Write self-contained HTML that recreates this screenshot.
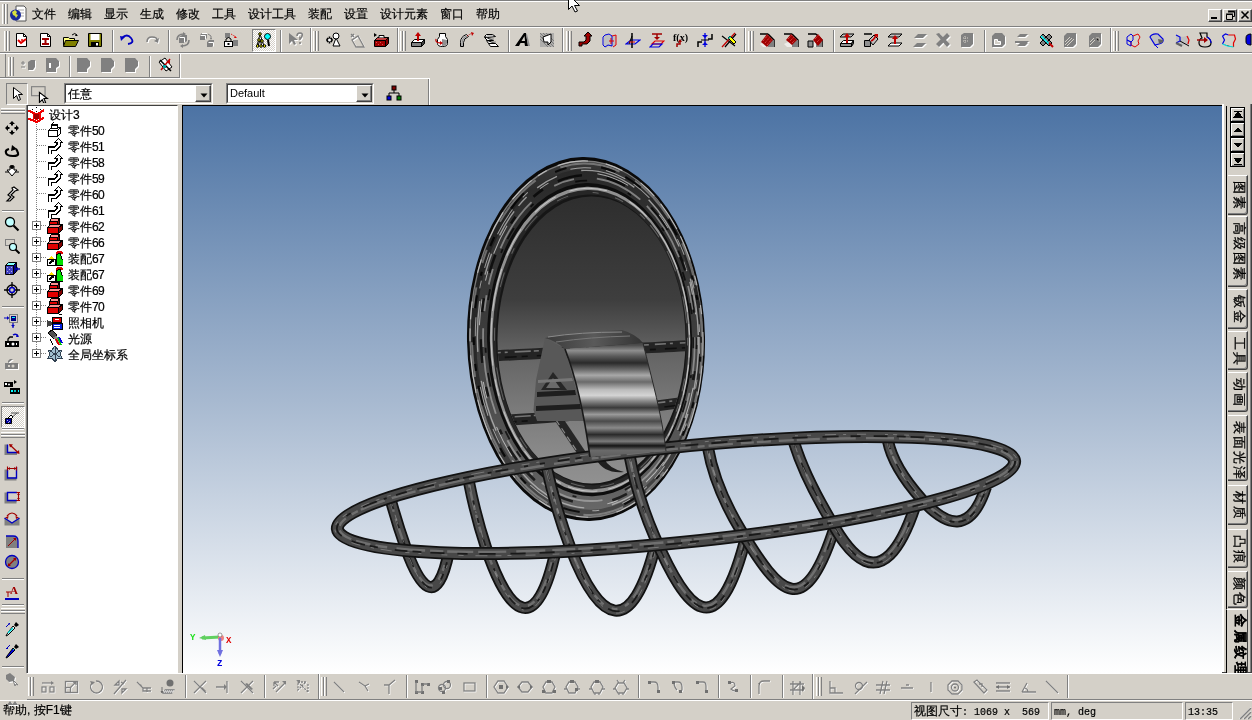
<!DOCTYPE html><html><head><meta charset="utf-8"><style>
*{box-sizing:border-box}
html,body{margin:0;padding:0}
body{width:1252px;height:720px;overflow:hidden;position:relative;background:#d4d0c8;font-family:"Liberation Sans",sans-serif;font-size:12px;color:#000;font-weight:500;-webkit-text-stroke:0.2px #000}
.a{position:absolute}
.rz{border-top:1px solid #fff;border-left:1px solid #fff;border-right:1px solid #808080;border-bottom:1px solid #808080}
.sk{border-top:1px solid #808080;border-left:1px solid #808080;border-right:1px solid #fff;border-bottom:1px solid #fff}
.hl{height:1px}
.vl{width:1px}
.grv{width:3px;border-left:1px solid #fff;border-right:1px solid #808080;background:#d4d0c8}
.grh{height:3px;border-top:1px solid #fff;border-bottom:1px solid #808080}
.sepv{width:2px;border-left:1px solid #808080;border-right:1px solid #fff}
.seph{height:2px;border-top:1px solid #808080;border-bottom:1px solid #fff}
.mt{top:7px;line-height:14px;font-size:12px}
svg{display:block}
</style></head><body style="will-change:transform">
<div class="a " style="left:0px;top:0px;width:1252px;height:1px;background:#808080"></div>
<div class="a " style="left:0px;top:1px;width:1252px;height:1px;background:#fff"></div>
<div class="a " style="left:0px;top:26px;width:1252px;height:1px;background:#808080"></div>
<div class="a " style="left:0px;top:27px;width:1252px;height:1px;background:#fff"></div>
<div class="a grv" style="left:2px;top:4px;width:3px;height:20px;"></div>
<div class="a grv" style="left:5px;top:4px;width:3px;height:20px;"></div>
<svg class="a" style="left:9px;top:5px" width="18" height="18" viewBox="0 0 18 18">
<path d="M7 1h8l2 2v13H7z" fill="#fff" stroke="#555" stroke-width="1"/>
<path d="M9 5h6M9 8h6M9 11h6" stroke="#aaa"/>
<circle cx="6.5" cy="10" r="5.5" fill="#1a2a9a"/>
<path d="M3 7l3-2 2 2-1 2 2 1-2 3-1-2-2-1z" fill="#d8e040"/>
</svg>
<div class="a mt" style="left:32px">文件</div>
<div class="a mt" style="left:68px">编辑</div>
<div class="a mt" style="left:104px">显示</div>
<div class="a mt" style="left:140px">生成</div>
<div class="a mt" style="left:176px">修改</div>
<div class="a mt" style="left:212px">工具</div>
<div class="a mt" style="left:248px">设计工具</div>
<div class="a mt" style="left:308px">装配</div>
<div class="a mt" style="left:344px">设置</div>
<div class="a mt" style="left:380px">设计元素</div>
<div class="a mt" style="left:440px">窗口</div>
<div class="a mt" style="left:476px">帮助</div>
<div class="a" style="left:1208px;top:9px;width:14px;height:13px;background:#d4d0c8;border-top:1px solid #fff;border-left:1px solid #fff;border-right:1px solid #404040;border-bottom:1px solid #404040;box-shadow:inset -1px -1px 0 #808080"><svg width="12" height="11"><rect x="2" y="7" width="6" height="2" fill="#000"/></svg></div>
<div class="a" style="left:1223px;top:9px;width:14px;height:13px;background:#d4d0c8;border-top:1px solid #fff;border-left:1px solid #fff;border-right:1px solid #404040;border-bottom:1px solid #404040;box-shadow:inset -1px -1px 0 #808080"><svg width="12" height="11"><path d="M4.5 1.5h6v5h-2M4 2h6M2.5 4.5h6v5h-6z" fill="none" stroke="#000"/><path d="M2 4h7M4 1h7" stroke="#000"/></svg></div>
<div class="a" style="left:1238px;top:9px;width:14px;height:13px;background:#d4d0c8;border-top:1px solid #fff;border-left:1px solid #fff;border-right:1px solid #404040;border-bottom:1px solid #404040;box-shadow:inset -1px -1px 0 #808080"><svg width="12" height="11"><path d="M2.5 1.5l7 7M9.5 1.5l-7 7" stroke="#000" stroke-width="1.6"/></svg></div>
<div class="a " style="left:0px;top:52px;width:1252px;height:1px;background:#808080"></div>
<div class="a " style="left:0px;top:53px;width:1252px;height:1px;background:#fff"></div>
<div class="a " style="left:0px;top:78px;width:430px;height:1px;background:#fff"></div>
<div class="a " style="left:0px;top:77px;width:180px;height:1px;background:#808080"></div>
<div class="a grv" style="left:4px;top:31px;width:3px;height:20px;"></div>
<div class="a grv" style="left:7px;top:31px;width:3px;height:20px;"></div>
<div class="a sepv" style="left:112px;top:30px;width:2px;height:22px;"></div>
<div class="a sepv" style="left:168px;top:30px;width:2px;height:22px;"></div>
<div class="a sepv" style="left:280px;top:30px;width:2px;height:22px;"></div>
<div class="a sepv" style="left:508px;top:30px;width:2px;height:22px;"></div>
<div class="a sepv" style="left:833px;top:30px;width:2px;height:22px;"></div>
<div class="a sepv" style="left:984px;top:30px;width:2px;height:22px;"></div>
<div class="a sepv" style="left:310px;top:28px;width:2px;height:24px;"></div>
<div class="a sepv" style="left:397px;top:28px;width:2px;height:24px;"></div>
<div class="a sepv" style="left:562px;top:28px;width:2px;height:24px;"></div>
<div class="a sepv" style="left:744px;top:28px;width:2px;height:24px;"></div>
<div class="a sepv" style="left:1110px;top:28px;width:2px;height:24px;"></div>
<div class="a grv" style="left:313px;top:31px;width:3px;height:20px;"></div>
<div class="a grv" style="left:316px;top:31px;width:3px;height:20px;"></div>
<div class="a grv" style="left:400px;top:31px;width:3px;height:20px;"></div>
<div class="a grv" style="left:403px;top:31px;width:3px;height:20px;"></div>
<div class="a grv" style="left:566px;top:31px;width:3px;height:20px;"></div>
<div class="a grv" style="left:569px;top:31px;width:3px;height:20px;"></div>
<div class="a grv" style="left:748px;top:31px;width:3px;height:20px;"></div>
<div class="a grv" style="left:751px;top:31px;width:3px;height:20px;"></div>
<div class="a grv" style="left:1113px;top:31px;width:3px;height:20px;"></div>
<div class="a grv" style="left:1116px;top:31px;width:3px;height:20px;"></div>
<div class="a " style="left:252px;top:29px;width:24px;height:23px;border-top:1px solid #808080;border-left:1px solid #808080;border-right:1px solid #fff;border-bottom:1px solid #fff;background-color:#e8e6e0;background-image:repeating-conic-gradient(#fff 0 25%,#d4d0c8 0 50%);background-size:2px 2px"></div>
<div class="a " style="left:5px;top:54px;width:1px;height:24px;background:#808080"></div>
<div class="a grv" style="left:8px;top:57px;width:3px;height:19px;"></div>
<div class="a grv" style="left:11px;top:57px;width:3px;height:19px;"></div>
<div class="a sepv" style="left:69px;top:56px;width:2px;height:21px;"></div>
<div class="a sepv" style="left:149px;top:56px;width:2px;height:21px;"></div>
<div class="a sepv" style="left:179px;top:54px;width:2px;height:24px;"></div>
<div class="a " style="left:6px;top:83px;width:22px;height:22px;border-top:1px solid #808080;border-left:1px solid #808080;border-right:1px solid #fff;border-bottom:1px solid #fff;background:#d4d0c8"></div>
<div class="a sepv" style="left:428px;top:79px;width:2px;height:26px;"></div>
<div class="a" style="left:64px;top:83px;width:149px;height:21px;border-top:1px solid #808080;border-left:1px solid #808080;border-right:1px solid #fff;border-bottom:1px solid #fff"><div style="position:absolute;left:0;top:0;right:0;bottom:0;border-top:1px solid #404040;border-left:1px solid #404040;border-right:1px solid #d4d0c8;border-bottom:1px solid #d4d0c8;background:#fff"><div style="position:absolute;left:2px;top:2px;line-height:14px;font-size:12px">任意</div><div style="position:absolute;right:0;top:0;width:16px;bottom:0;background:#d4d0c8;border-top:1px solid #fff;border-left:1px solid #fff;border-right:1px solid #404040;border-bottom:1px solid #404040;box-shadow:inset -1px -1px 0 #808080"><svg width="14" height="16" style="position:absolute;left:2px;top:2px"><path d="M2.5 5.5h7l-3.5 4z" fill="#000"/></svg></div></div></div>
<div class="a" style="left:226px;top:83px;width:148px;height:21px;border-top:1px solid #808080;border-left:1px solid #808080;border-right:1px solid #fff;border-bottom:1px solid #fff"><div style="position:absolute;left:0;top:0;right:0;bottom:0;border-top:1px solid #404040;border-left:1px solid #404040;border-right:1px solid #d4d0c8;border-bottom:1px solid #d4d0c8;background:#fff"><div style="position:absolute;left:2px;top:2px;line-height:14px;font-size:12px"><span style="font-family:'Liberation Sans';font-size:11px;font-weight:normal;-webkit-text-stroke:0;position:relative;top:-1px">Default</span></div><div style="position:absolute;right:0;top:0;width:16px;bottom:0;background:#d4d0c8;border-top:1px solid #fff;border-left:1px solid #fff;border-right:1px solid #404040;border-bottom:1px solid #404040;box-shadow:inset -1px -1px 0 #808080"><svg width="14" height="16" style="position:absolute;left:2px;top:2px"><path d="M2.5 5.5h7l-3.5 4z" fill="#000"/></svg></div></div></div>
<div class="a " style="left:26px;top:105px;width:1px;height:568px;background:#808080"></div>
<div class="a grh" style="left:1px;top:108px;width:24px;height:3px;"></div>
<div class="a grh" style="left:1px;top:111px;width:24px;height:3px;"></div>
<div class="a seph" style="left:2px;top:210px;width:22px;height:2px;"></div>
<div class="a seph" style="left:2px;top:306px;width:22px;height:2px;"></div>
<div class="a seph" style="left:2px;top:402px;width:22px;height:2px;"></div>
<div class="a seph" style="left:2px;top:428px;width:22px;height:2px;"></div>
<div class="a seph" style="left:2px;top:578px;width:22px;height:2px;"></div>
<div class="a seph" style="left:2px;top:604px;width:22px;height:2px;"></div>
<div class="a seph" style="left:2px;top:666px;width:22px;height:2px;"></div>
<div class="a " style="left:1px;top:406px;width:24px;height:22px;border-top:1px solid #808080;border-left:1px solid #808080;border-right:1px solid #fff;border-bottom:1px solid #fff;background-color:#e8e6e0;background-image:repeating-conic-gradient(#fff 0 25%,#d4d0c8 0 50%);background-size:2px 2px"></div>
<div class="a grh" style="left:1px;top:432px;width:24px;height:3px;"></div>
<div class="a grh" style="left:1px;top:435px;width:24px;height:3px;"></div>
<div class="a grh" style="left:1px;top:608px;width:24px;height:3px;"></div>
<div class="a grh" style="left:1px;top:611px;width:24px;height:3px;"></div>
<div class="a " style="left:27px;top:105px;width:151px;height:569px;background:#fff;border-top:1px solid #404040;border-left:1px solid #404040;border-right:1px solid #fff;border-bottom:1px solid #fff"></div>
<div class="a " style="left:178px;top:105px;width:4px;height:568px;background:#d4d0c8"></div>
<div class="a " style="left:182px;top:105px;width:1041px;height:568px;border-top:1px solid #000;border-left:1px solid #000;background:linear-gradient(to bottom,#4c73a4 0%,#a7b9d0 52%,#ffffff 100%)"></div>
<div class="a " style="left:1222px;top:104px;width:2px;height:569px;background:#fff"></div>
<div class="a " style="left:1226px;top:106px;width:2px;height:567px;background:#000"></div>
<div class="a " style="left:1250px;top:104px;width:2px;height:569px;background:#404040"></div>
<div class="a " style="left:27px;top:673px;width:1225px;height:1px;background:#fff"></div>
<div class="a " style="left:27px;top:699px;width:1225px;height:1px;background:#808080"></div>
<div class="a " style="left:0px;top:700px;width:1252px;height:1px;background:#fff"></div>
<div class="a grv" style="left:28px;top:677px;width:3px;height:19px;"></div>
<div class="a grv" style="left:31px;top:677px;width:3px;height:19px;"></div>
<div class="a sepv" style="left:185px;top:675px;width:2px;height:23px;"></div>
<div class="a sepv" style="left:264px;top:675px;width:2px;height:23px;"></div>
<div class="a sepv" style="left:406px;top:675px;width:2px;height:23px;"></div>
<div class="a sepv" style="left:486px;top:675px;width:2px;height:23px;"></div>
<div class="a sepv" style="left:638px;top:675px;width:2px;height:23px;"></div>
<div class="a sepv" style="left:718px;top:675px;width:2px;height:23px;"></div>
<div class="a sepv" style="left:750px;top:675px;width:2px;height:23px;"></div>
<div class="a sepv" style="left:782px;top:675px;width:2px;height:23px;"></div>
<div class="a sepv" style="left:1067px;top:675px;width:2px;height:23px;"></div>
<div class="a sepv" style="left:318px;top:674px;width:2px;height:25px;"></div>
<div class="a grv" style="left:321px;top:677px;width:3px;height:19px;"></div>
<div class="a grv" style="left:324px;top:677px;width:3px;height:19px;"></div>
<div class="a sepv" style="left:812px;top:674px;width:2px;height:25px;"></div>
<div class="a grv" style="left:816px;top:677px;width:3px;height:19px;"></div>
<div class="a grv" style="left:819px;top:677px;width:3px;height:19px;"></div>
<div class="a" style="left:3px;top:703px;line-height:14px">帮助, 按F1键</div>
<div class="a sk" style="left:911px;top:702px;width:138px;height:18px;font-size:12px;line-height:16px;padding-left:2px;white-space:pre">视图尺寸<span style="font-family:'Liberation Mono',monospace;font-size:10px">: 1069 x  569</span></div>
<div class="a sk" style="left:1051px;top:702px;width:132px;height:18px;font-size:12px;line-height:16px;padding-left:2px;white-space:pre"><span style="font-family:'Liberation Mono',monospace;font-size:10px">mm, deg</span></div>
<div class="a sk" style="left:1185px;top:702px;width:48px;height:18px;font-size:12px;line-height:16px;padding-left:2px;white-space:pre"><span style="font-family:'Liberation Mono',monospace;font-size:10px">13:35</span></div>
<svg class="a" style="left:1236px;top:704px" width="16" height="16"><path d="M15 3L3 15M15 7L7 15M15 11L11 15" stroke="#fff"/><path d="M15 4L4 15M15 8L8 15M15 12L12 15" stroke="#808080" stroke-width="1.5"/></svg>
<svg class="a" style="left:0;top:0" width="1252" height="720" viewBox="0 0 1252 720">
<defs>
<linearGradient id="face" gradientUnits="userSpaceOnUse" x1="0" y1="197" x2="0" y2="490">
<stop offset="0" stop-color="#2e2e2e"/><stop offset="0.35" stop-color="#3e3e3e"/><stop offset="0.52" stop-color="#626262"/><stop offset="0.72" stop-color="#7a7a7a"/><stop offset="0.88" stop-color="#8a8a8a"/><stop offset="1" stop-color="#929292"/>
</linearGradient>
<linearGradient id="brk" gradientUnits="userSpaceOnUse" x1="0" y1="345" x2="0" y2="457">
<stop offset="0" stop-color="#4a4a4a"/><stop offset="0.05" stop-color="#8e8e8e"/><stop offset="0.1" stop-color="#5a5a5a"/>
<stop offset="0.16" stop-color="#2a2a2a"/><stop offset="0.22" stop-color="#6a6a6a"/><stop offset="0.27" stop-color="#a8a8a8"/>
<stop offset="0.33" stop-color="#6a6a6a"/><stop offset="0.4" stop-color="#bcbcbc"/><stop offset="0.45" stop-color="#d4d4d4"/><stop offset="0.5" stop-color="#8a8a8a"/>
<stop offset="0.56" stop-color="#3a3a3a"/><stop offset="0.62" stop-color="#9a9a9a"/><stop offset="0.68" stop-color="#4a4a4a"/>
<stop offset="0.74" stop-color="#8a8a8a"/><stop offset="0.8" stop-color="#2a2a2a"/><stop offset="0.86" stop-color="#7a7a7a"/>
<stop offset="0.9" stop-color="#151515"/><stop offset="0.94" stop-color="#6a6a6a"/><stop offset="1" stop-color="#5e5e5e"/>
</linearGradient>
<linearGradient id="brt" x1="0" y1="0" x2="1" y2="0">
<stop offset="0" stop-color="#3a3a3a"/><stop offset="0.5" stop-color="#5a5a5a"/><stop offset="1" stop-color="#333"/>
</linearGradient>
<linearGradient id="rg1" gradientUnits="userSpaceOnUse" x1="0" y1="157" x2="0" y2="521"><stop offset="0" stop-color="#3a3a3a"/><stop offset="0.15" stop-color="#222"/><stop offset="0.6" stop-color="#2a2a2a"/><stop offset="1" stop-color="#4a4a4a"/></linearGradient>
<linearGradient id="rg3" gradientUnits="userSpaceOnUse" x1="0" y1="157" x2="0" y2="521"><stop offset="0" stop-color="#262626"/><stop offset="0.15" stop-color="#303030"/><stop offset="0.5" stop-color="#3e3e3e"/><stop offset="1" stop-color="#6a6a6a"/></linearGradient>
<clipPath id="fclip"><ellipse cx="591.5" cy="340" rx="94" ry="143.5"/></clipPath>
</defs>
<g transform="rotate(-1.2 586 339)"><ellipse cx="586.0" cy="339.0" rx="119.0" ry="182.0" fill="#0a0a0a"/><ellipse cx="586.4" cy="339.1" rx="117.0" ry="178.9" fill="#7a7a7a"/><ellipse cx="586.7" cy="339.1" rx="116.0" ry="177.4" fill="url(#rg1)"/><ellipse cx="587.6" cy="339.3" rx="111.5" ry="170.4" fill="url(#rg3)"/><ellipse cx="589.6" cy="339.7" rx="102.5" ry="156.6" fill="#0e0e0e"/><ellipse cx="590.1" cy="339.8" rx="100.2" ry="153.1" fill="#909090"/><ellipse cx="590.6" cy="339.8" rx="98.0" ry="149.7" fill="#262626"/><ellipse cx="591.2" cy="339.9" rx="95.2" ry="145.4" fill="#161616"/><ellipse cx="586.5" cy="339.1" rx="116.5" ry="178.2" fill="none" stroke="#d0d0d0" stroke-width="1.2" stroke-dasharray="19 10 30 8 26 16 10 20 9 18 10 9 22 29 12 12 29 33 28 17 42 7 38 14 13 9 18 29 14 22 30 16 27 8 10 12 31 18 18 22" opacity="0.75"/><ellipse cx="586.9" cy="339.2" rx="115.0" ry="175.8" fill="none" stroke="#a8a8a8" stroke-width="2.0" stroke-dasharray="37 18 56 32 26 28 41 38 53 18 67 12 35 34 21 25 14 31 55 28 61 18 51 28 44 23 59 41 39 31 15 32 48 42 58 17 34 31 13 24" opacity="0.55"/><ellipse cx="587.2" cy="339.2" rx="113.5" ry="173.5" fill="none" stroke="#000" stroke-width="2.2" stroke-dasharray="6 14 5 41 6 19 10 46 5 28 13 46 17 45 8 26 10 46 20 15 7 19 8 29 13 20 4 27 10 33 20 38 12 35 15 11 19 42 18 43" opacity="0.8"/><ellipse cx="587.5" cy="339.3" rx="112.2" ry="171.6" fill="none" stroke="#d0d0d0" stroke-width="1.0" stroke-dasharray="17 26 9 36 8 12 12 16 16 11 6 15 9 24 7 46 23 15 13 24 16 14 30 51 19 29 8 13 16 20 29 16 7 49 21 15 21 10 21 50" opacity="0.7"/><ellipse cx="587.9" cy="339.3" rx="110.5" ry="168.9" fill="none" stroke="#c8c8c8" stroke-width="1.4" stroke-dasharray="53 25 23 16 19 28 37 28 27 12 50 34 52 29 51 27 22 20 28 7 12 14 23 25 57 19 56 34 57 16 21 12 20 12 41 31 52 19 42 28" opacity="0.7"/><ellipse cx="588.2" cy="339.4" rx="109.0" ry="166.6" fill="none" stroke="#e0e0e0" stroke-width="1.0" stroke-dasharray="8 43 31 49 27 34 11 49 15 50 33 30 17 57 26 19 10 18 31 50 10 51 33 43 16 37 10 11 33 42 21 56 18 53 29 21 13 25 13 39" opacity="0.7"/><ellipse cx="588.5" cy="339.5" rx="107.5" ry="164.3" fill="none" stroke="#000" stroke-width="2.6" stroke-dasharray="12 22 9 39 14 24 20 39 16 40 18 26 19 8 16 14 5 35 10 24 24 27 14 26 19 35 8 27 12 17 25 25 20 34 28 23 21 25 18 32" opacity="0.7"/><ellipse cx="588.9" cy="339.5" rx="105.8" ry="161.6" fill="none" stroke="#b8b8b8" stroke-width="1.8" stroke-dasharray="37 19 39 29 51 27 65 12 43 29 59 9 19 17 16 11 16 22 56 28 21 23 49 9 61 30 24 29 34 18 67 26 21 16 41 14 23 13 52 6" opacity="0.6"/><ellipse cx="589.3" cy="339.6" rx="104.0" ry="158.9" fill="none" stroke="#000" stroke-width="1.8" stroke-dasharray="11 27 3 23 12 31 4 50 14 50 4 20 4 42 7 14 9 47 14 20 5 48 11 38 4 11 13 27 4 48 12 43 4 45 4 45 9 23 11 48" opacity="0.7"/><ellipse cx="590.3" cy="339.8" rx="99.2" ry="151.6" fill="none" stroke="#d8d8d8" stroke-width="1.0" stroke-dasharray="20 7 31 10 14 8 11 9 22 11 41 11 30 8 24 5 20 5 40 16 17 14 48 7 43 14 30 22 26 15 38 25 23 22 39 18 26 12 11 7" opacity="0.7"/><ellipse cx="591.0" cy="339.9" rx="96.5" ry="147.3" fill="none" stroke="#9a9a9a" stroke-width="1.0" stroke-dasharray="8 33 13 13 8 37 30 31 14 16 14 24 10 23 13 41 33 27 13 41 15 20 6 21 19 25 12 25 6 17 9 21 7 8 15 16 22 26 27 31" opacity="0.5"/></g>
<ellipse cx="591.5" cy="340" rx="94" ry="143.5" fill="url(#face)"/>
<g clip-path="url(#fclip)">
<path d="M490 356 C560 353 640 348 700 345" stroke="#242424" stroke-width="11" fill="none"/>
<path d="M490 353 C560 350 640 345 700 342" stroke="#8a8a8a" stroke-width="1.6" fill="none" stroke-dasharray="11 4 3 7 16 3 5 6" opacity="0.8"/>
<path d="M490 358 C560 355 640 350 700 347" stroke="#0a0a0a" stroke-width="1.6" fill="none" stroke-dasharray="6 9 12 5" opacity="0.8"/>
<path d="M490 421 C560 418 640 409 700 400" stroke="#242424" stroke-width="11" fill="none"/>
<path d="M490 418 C560 415 640 406 700 397" stroke="#8a8a8a" stroke-width="1.6" fill="none" stroke-dasharray="11 4 3 7 16 3 5 6" opacity="0.8"/>
<path d="M490 423 C560 420 640 411 700 402" stroke="#0a0a0a" stroke-width="1.6" fill="none" stroke-dasharray="6 9 12 5" opacity="0.8"/>
<path d="M558 418 L585 458" stroke="#262626" stroke-width="8" fill="none"/>
<path d="M556 420 L583 460" stroke="#8a8a8a" stroke-width="1.2" fill="none" stroke-dasharray="6 4"/>
<path d="M545 338 L536 380 L533.5 410 L537 421 L585 421 L565 349z" fill="#585858"/>
<path d="M541 390 L553 372 L567 390z" fill="#262626"/><path d="M546 388 L553 378 L560 388z" fill="#6a6a6a"/>
<path d="M537 392 L575 390 L576 395 L537 397z M536 406 L580 404 L581 409 L536 411z" fill="#1e1e1e"/>
<path d="M538 380 L572 378 L573 381 L538 383z" fill="#777"/>
<path d="M596 459 Q604 474 624 472 Q608 468 604 458z" fill="#1e1e1e"/>


</g>

<g><path d="M391.0 501.0 C395.1 515.9 399.9 531.4 405.6 547.5 C419.3 586.3 437.2 611.2 449.0 551.0" fill="none" stroke="#121212" stroke-width="12" stroke-linecap="butt"/><path d="M391.0 501.0 C395.1 515.9 399.9 531.4 405.6 547.5 C419.3 586.3 437.2 611.2 449.0 551.0" fill="none" stroke="#484848" stroke-width="8.5" stroke-linecap="butt"/><path d="M391.0 501.0 C395.1 515.9 399.9 531.4 405.6 547.5 C419.3 586.3 437.2 611.2 449.0 551.0" fill="none" stroke="#8a8a8a" stroke-width="2.4" stroke-dasharray="13 7 22 6 14 7 8 6 17 8 6 4 6 9 18 2 23 10 17 7 7 2 15 2 8 4 5 6 13 9" opacity="0.6" transform="translate(-0.8,-1.6)"/><path d="M391.0 501.0 C395.1 515.9 399.9 531.4 405.6 547.5 C419.3 586.3 437.2 611.2 449.0 551.0" fill="none" stroke="#0e0e0e" stroke-width="1.8" stroke-dasharray="8 12 8 12 8 7 14 17 12 13 6 6 6 4 11 9 12 8 13 15 2 6 13 10 13 9 3 12 11 7" opacity="0.8" transform="translate(0.3,0.6)"/><path d="M391.0 501.0 C395.1 515.9 399.9 531.4 405.6 547.5 C419.3 586.3 437.2 611.2 449.0 551.0" fill="none" stroke="#9a9a9a" stroke-width="1" stroke-dasharray="3 9 10 16 3 8 3 5 8 7 6 11 3 16 3 14 3 11 4 8 10 17 4 18 4 10 9 14 3 20" opacity="0.6" transform="translate(0.8,2.4)"/><path d="M468.8 481.3 C473.6 505.4 479.3 527.4 486.0 547.5 C509.8 619.0 537.6 635.8 555.8 549.8" fill="none" stroke="#121212" stroke-width="12" stroke-linecap="butt"/><path d="M468.8 481.3 C473.6 505.4 479.3 527.4 486.0 547.5 C509.8 619.0 537.6 635.8 555.8 549.8" fill="none" stroke="#484848" stroke-width="8.5" stroke-linecap="butt"/><path d="M468.8 481.3 C473.6 505.4 479.3 527.4 486.0 547.5 C509.8 619.0 537.6 635.8 555.8 549.8" fill="none" stroke="#8a8a8a" stroke-width="2.4" stroke-dasharray="8 4 19 5 10 2 6 7 9 7 11 6 23 6 15 9 8 3 22 9 9 3 19 10 8 10 21 7 12 3" opacity="0.6" transform="translate(-0.8,-1.6)"/><path d="M468.8 481.3 C473.6 505.4 479.3 527.4 486.0 547.5 C509.8 619.0 537.6 635.8 555.8 549.8" fill="none" stroke="#0e0e0e" stroke-width="1.8" stroke-dasharray="3 16 5 13 5 15 9 7 4 13 3 6 9 15 9 7 13 6 3 7 7 4 4 8 9 5 6 15 13 12" opacity="0.8" transform="translate(0.3,0.6)"/><path d="M468.8 481.3 C473.6 505.4 479.3 527.4 486.0 547.5 C509.8 619.0 537.6 635.8 555.8 549.8" fill="none" stroke="#9a9a9a" stroke-width="1" stroke-dasharray="8 13 3 4 2 19 8 20 2 14 6 16 4 20 2 13 8 19 8 15 8 19 5 15 9 18 5 17 9 13" opacity="0.6" transform="translate(0.8,2.4)"/><path d="M546.6 467.3 C552.6 494.8 560.5 521.6 570.3 547.5 C599.4 624.3 631.9 640.5 656.0 543.0" fill="none" stroke="#121212" stroke-width="12" stroke-linecap="butt"/><path d="M546.6 467.3 C552.6 494.8 560.5 521.6 570.3 547.5 C599.4 624.3 631.9 640.5 656.0 543.0" fill="none" stroke="#484848" stroke-width="8.5" stroke-linecap="butt"/><path d="M546.6 467.3 C552.6 494.8 560.5 521.6 570.3 547.5 C599.4 624.3 631.9 640.5 656.0 543.0" fill="none" stroke="#8a8a8a" stroke-width="2.4" stroke-dasharray="16 5 16 7 6 7 24 9 18 5 19 7 13 9 6 8 5 7 14 4 18 6 16 10 9 2 10 7 8 3" opacity="0.6" transform="translate(-0.8,-1.6)"/><path d="M546.6 467.3 C552.6 494.8 560.5 521.6 570.3 547.5 C599.4 624.3 631.9 640.5 656.0 543.0" fill="none" stroke="#0e0e0e" stroke-width="1.8" stroke-dasharray="13 12 7 15 6 12 5 9 11 16 12 8 9 7 4 10 12 15 10 16 6 5 7 7 5 9 9 10 6 15" opacity="0.8" transform="translate(0.3,0.6)"/><path d="M546.6 467.3 C552.6 494.8 560.5 521.6 570.3 547.5 C599.4 624.3 631.9 640.5 656.0 543.0" fill="none" stroke="#9a9a9a" stroke-width="1" stroke-dasharray="10 11 2 4 9 4 8 13 4 17 2 6 6 4 9 8 3 4 7 11 7 15 9 20 8 7 6 7 2 12" opacity="0.6" transform="translate(0.8,2.4)"/><path d="M629.6 456.0 C635.1 484.2 643.5 511.2 654.7 537.0 C686.6 610.3 717.9 651.2 747.0 533.0" fill="none" stroke="#121212" stroke-width="12" stroke-linecap="butt"/><path d="M629.6 456.0 C635.1 484.2 643.5 511.2 654.7 537.0 C686.6 610.3 717.9 651.2 747.0 533.0" fill="none" stroke="#484848" stroke-width="8.5" stroke-linecap="butt"/><path d="M629.6 456.0 C635.1 484.2 643.5 511.2 654.7 537.0 C686.6 610.3 717.9 651.2 747.0 533.0" fill="none" stroke="#8a8a8a" stroke-width="2.4" stroke-dasharray="18 3 10 5 18 6 16 8 12 8 22 3 22 8 7 6 16 9 12 7 21 8 23 6 17 4 18 9 17 8" opacity="0.6" transform="translate(-0.8,-1.6)"/><path d="M629.6 456.0 C635.1 484.2 643.5 511.2 654.7 537.0 C686.6 610.3 717.9 651.2 747.0 533.0" fill="none" stroke="#0e0e0e" stroke-width="1.8" stroke-dasharray="5 16 13 17 8 14 6 16 12 8 3 9 9 14 8 3 11 4 11 5 6 14 4 5 8 13 12 13 13 10" opacity="0.8" transform="translate(0.3,0.6)"/><path d="M629.6 456.0 C635.1 484.2 643.5 511.2 654.7 537.0 C686.6 610.3 717.9 651.2 747.0 533.0" fill="none" stroke="#9a9a9a" stroke-width="1" stroke-dasharray="10 5 4 12 4 16 7 12 9 13 4 10 9 19 4 18 10 12 7 7 6 12 7 4 10 12 5 17 7 12" opacity="0.6" transform="translate(0.8,2.4)"/><path d="M708.0 448.0 C712.7 474.5 723.7 502.0 741.0 530.6 C780.1 595.4 804.9 624.4 837.0 520.0" fill="none" stroke="#121212" stroke-width="12" stroke-linecap="butt"/><path d="M708.0 448.0 C712.7 474.5 723.7 502.0 741.0 530.6 C780.1 595.4 804.9 624.4 837.0 520.0" fill="none" stroke="#484848" stroke-width="8.5" stroke-linecap="butt"/><path d="M708.0 448.0 C712.7 474.5 723.7 502.0 741.0 530.6 C780.1 595.4 804.9 624.4 837.0 520.0" fill="none" stroke="#8a8a8a" stroke-width="2.4" stroke-dasharray="18 2 15 5 23 10 9 6 7 5 20 9 14 4 8 7 22 3 19 2 8 4 18 5 11 7 6 8 7 6" opacity="0.6" transform="translate(-0.8,-1.6)"/><path d="M708.0 448.0 C712.7 474.5 723.7 502.0 741.0 530.6 C780.1 595.4 804.9 624.4 837.0 520.0" fill="none" stroke="#0e0e0e" stroke-width="1.8" stroke-dasharray="5 6 8 9 7 9 8 5 5 12 10 10 12 12 12 6 11 14 13 7 6 16 5 17 12 5 5 13 5 4" opacity="0.8" transform="translate(0.3,0.6)"/><path d="M708.0 448.0 C712.7 474.5 723.7 502.0 741.0 530.6 C780.1 595.4 804.9 624.4 837.0 520.0" fill="none" stroke="#9a9a9a" stroke-width="1" stroke-dasharray="9 11 8 6 5 15 2 7 8 19 10 6 6 16 6 15 3 5 3 4 6 12 7 6 3 7 9 20 10 5" opacity="0.6" transform="translate(0.8,2.4)"/><path d="M794.0 442.4 C801.0 464.8 812.7 489.9 829.0 517.5 C838.0 532.7 879.1 618.5 916.0 503.5" fill="none" stroke="#121212" stroke-width="12" stroke-linecap="butt"/><path d="M794.0 442.4 C801.0 464.8 812.7 489.9 829.0 517.5 C838.0 532.7 879.1 618.5 916.0 503.5" fill="none" stroke="#484848" stroke-width="8.5" stroke-linecap="butt"/><path d="M794.0 442.4 C801.0 464.8 812.7 489.9 829.0 517.5 C838.0 532.7 879.1 618.5 916.0 503.5" fill="none" stroke="#8a8a8a" stroke-width="2.4" stroke-dasharray="5 10 13 8 11 6 14 5 16 2 18 9 8 6 19 5 8 3 14 2 22 9 18 9 17 5 16 6 23 9" opacity="0.6" transform="translate(-0.8,-1.6)"/><path d="M794.0 442.4 C801.0 464.8 812.7 489.9 829.0 517.5 C838.0 532.7 879.1 618.5 916.0 503.5" fill="none" stroke="#0e0e0e" stroke-width="1.8" stroke-dasharray="5 16 11 14 12 9 12 15 10 14 11 9 10 4 6 10 3 8 10 12 5 16 10 8 10 11 8 8 14 12" opacity="0.8" transform="translate(0.3,0.6)"/><path d="M794.0 442.4 C801.0 464.8 812.7 489.9 829.0 517.5 C838.0 532.7 879.1 618.5 916.0 503.5" fill="none" stroke="#9a9a9a" stroke-width="1" stroke-dasharray="8 16 10 4 7 16 4 10 2 7 5 5 4 19 6 12 10 13 10 14 9 5 7 16 2 19 3 12 3 12" opacity="0.6" transform="translate(0.8,2.4)"/><path d="M888.0 441.0 C891.5 458.6 902.7 477.9 921.4 499.0 C946.4 527.1 970.6 534.6 986.0 487.0" fill="none" stroke="#121212" stroke-width="12" stroke-linecap="butt"/><path d="M888.0 441.0 C891.5 458.6 902.7 477.9 921.4 499.0 C946.4 527.1 970.6 534.6 986.0 487.0" fill="none" stroke="#484848" stroke-width="8.5" stroke-linecap="butt"/><path d="M888.0 441.0 C891.5 458.6 902.7 477.9 921.4 499.0 C946.4 527.1 970.6 534.6 986.0 487.0" fill="none" stroke="#8a8a8a" stroke-width="2.4" stroke-dasharray="16 2 23 5 15 7 11 4 17 7 10 8 10 2 9 2 7 8 12 9 19 2 24 10 6 9 13 6 23 4" opacity="0.6" transform="translate(-0.8,-1.6)"/><path d="M888.0 441.0 C891.5 458.6 902.7 477.9 921.4 499.0 C946.4 527.1 970.6 534.6 986.0 487.0" fill="none" stroke="#0e0e0e" stroke-width="1.8" stroke-dasharray="8 16 10 10 13 14 9 5 9 9 5 4 8 5 7 12 8 7 9 9 11 10 14 16 11 6 4 15 11 12" opacity="0.8" transform="translate(0.3,0.6)"/><path d="M888.0 441.0 C891.5 458.6 902.7 477.9 921.4 499.0 C946.4 527.1 970.6 534.6 986.0 487.0" fill="none" stroke="#9a9a9a" stroke-width="1" stroke-dasharray="5 8 8 13 7 14 8 7 4 20 9 18 2 5 4 11 7 5 6 5 3 15 6 14 5 12 4 9 8 18" opacity="0.6" transform="translate(0.8,2.4)"/><g transform="rotate(-5.73 676 495)"><ellipse cx="676" cy="495" rx="340.3" ry="47.8" fill="none" stroke="#121212" stroke-width="13" /><ellipse cx="676" cy="495" rx="340.3" ry="47.8" fill="none" stroke="#484848" stroke-width="9.5" /><ellipse cx="676" cy="495" rx="338.5" ry="46.0" fill="none" stroke="#8a8a8a" stroke-width="2.4" stroke-dasharray="7 3 26 7 25 4 16 4 26 5 22 10 14 6 24 10 16 5 8 9 7 2 20 6 23 4 25 2 11 7 7 4 24 8 13 3 14 8 15 3 23 7 29 10 28 5 26 4 13 5 29 9 12 5 15 5 15 5 10 7" opacity="0.6"/><ellipse cx="676" cy="495" rx="340.8" ry="48.3" fill="none" stroke="#0e0e0e" stroke-width="1.8" stroke-dasharray="14 11 15 11 5 14 15 7 3 10 11 11 17 12 14 4 11 14 4 4 13 16 4 12 5 13 12 6 6 14 10 14 9 8 17 12 10 11 13 13 16 9 15 12 15 14 15 15 16 12 10 13 14 9 9 5 13 17 8 5" opacity="0.8"/><ellipse cx="676" cy="495" rx="342.9" ry="50.4" fill="none" stroke="#9a9a9a" stroke-width="1" stroke-dasharray="5 11 6 20 3 9 4 14 11 7 3 11 9 19 3 5 4 7 5 16 9 7 4 8 4 16 6 13 12 12 5 19 13 9 9 20 8 7 3 20 11 10 8 12 5 20 10 8 3 12 7 17 10 14 4 6 6 8 12 12" opacity="0.6"/></g><path d="M545 338 Q580 331 622 330 Q636 334 643 343 L565 349 Q556 341 545 338Z" fill="url(#brt)"/>
<path d="M548 337 Q580 332 622 332" stroke="#8a8a8a" stroke-width="1" fill="none"/>
<path d="M556 342 Q590 337 630 336" stroke="#777" stroke-width="1" fill="none"/>
<path d="M565 349 L643 343 C652 380 662 415 666 451 L590 457 C585 420 577 380 565 349Z" fill="url(#brk)"/>
<path d="M565 349 C577 380 585 420 590 457" stroke="#1a1a1a" stroke-width="1.6" fill="none"/>
<path d="M643 343 C652 380 662 415 666 451" stroke="#2a2a2a" stroke-width="1" fill="none"/>
</g></svg>
<div class="a" style="left:36px;top:122px;width:1px;height:228px;background:repeating-linear-gradient(to bottom,#808080 0 1px,transparent 1px 2px)"></div>
<div class="a" style="left:49px;top:108px;line-height:14px;white-space:nowrap">设计3</div>
<div class="a" style="left:68px;top:124px;line-height:14px;white-space:nowrap">零件<span style="letter-spacing:-0.6px">50</span></div>
<div class="a" style="left:37px;top:129px;width:10px;height:1px;background:repeating-linear-gradient(to right,#808080 0 1px,transparent 1px 2px)"></div>
<div class="a" style="left:68px;top:140px;line-height:14px;white-space:nowrap">零件<span style="letter-spacing:-0.6px">51</span></div>
<div class="a" style="left:37px;top:145px;width:10px;height:1px;background:repeating-linear-gradient(to right,#808080 0 1px,transparent 1px 2px)"></div>
<div class="a" style="left:68px;top:156px;line-height:14px;white-space:nowrap">零件<span style="letter-spacing:-0.6px">58</span></div>
<div class="a" style="left:37px;top:161px;width:10px;height:1px;background:repeating-linear-gradient(to right,#808080 0 1px,transparent 1px 2px)"></div>
<div class="a" style="left:68px;top:172px;line-height:14px;white-space:nowrap">零件<span style="letter-spacing:-0.6px">59</span></div>
<div class="a" style="left:37px;top:177px;width:10px;height:1px;background:repeating-linear-gradient(to right,#808080 0 1px,transparent 1px 2px)"></div>
<div class="a" style="left:68px;top:188px;line-height:14px;white-space:nowrap">零件<span style="letter-spacing:-0.6px">60</span></div>
<div class="a" style="left:37px;top:193px;width:10px;height:1px;background:repeating-linear-gradient(to right,#808080 0 1px,transparent 1px 2px)"></div>
<div class="a" style="left:68px;top:204px;line-height:14px;white-space:nowrap">零件<span style="letter-spacing:-0.6px">61</span></div>
<div class="a" style="left:37px;top:209px;width:10px;height:1px;background:repeating-linear-gradient(to right,#808080 0 1px,transparent 1px 2px)"></div>
<div class="a" style="left:68px;top:220px;line-height:14px;white-space:nowrap">零件<span style="letter-spacing:-0.6px">62</span></div>
<div class="a" style="left:37px;top:225px;width:10px;height:1px;background:repeating-linear-gradient(to right,#808080 0 1px,transparent 1px 2px)"></div>
<div class="a" style="left:32px;top:221px;width:9px;height:9px;border:1px solid #808080;background:#fff"><div style="position:absolute;left:1px;top:3px;width:5px;height:1px;background:#000"></div><div style="position:absolute;left:3px;top:1px;width:1px;height:5px;background:#000"></div></div>
<div class="a" style="left:68px;top:236px;line-height:14px;white-space:nowrap">零件<span style="letter-spacing:-0.6px">66</span></div>
<div class="a" style="left:37px;top:241px;width:10px;height:1px;background:repeating-linear-gradient(to right,#808080 0 1px,transparent 1px 2px)"></div>
<div class="a" style="left:32px;top:237px;width:9px;height:9px;border:1px solid #808080;background:#fff"><div style="position:absolute;left:1px;top:3px;width:5px;height:1px;background:#000"></div><div style="position:absolute;left:3px;top:1px;width:1px;height:5px;background:#000"></div></div>
<div class="a" style="left:68px;top:252px;line-height:14px;white-space:nowrap">装配<span style="letter-spacing:-0.6px">67</span></div>
<div class="a" style="left:37px;top:257px;width:10px;height:1px;background:repeating-linear-gradient(to right,#808080 0 1px,transparent 1px 2px)"></div>
<div class="a" style="left:32px;top:253px;width:9px;height:9px;border:1px solid #808080;background:#fff"><div style="position:absolute;left:1px;top:3px;width:5px;height:1px;background:#000"></div><div style="position:absolute;left:3px;top:1px;width:1px;height:5px;background:#000"></div></div>
<div class="a" style="left:68px;top:268px;line-height:14px;white-space:nowrap">装配<span style="letter-spacing:-0.6px">67</span></div>
<div class="a" style="left:37px;top:273px;width:10px;height:1px;background:repeating-linear-gradient(to right,#808080 0 1px,transparent 1px 2px)"></div>
<div class="a" style="left:32px;top:269px;width:9px;height:9px;border:1px solid #808080;background:#fff"><div style="position:absolute;left:1px;top:3px;width:5px;height:1px;background:#000"></div><div style="position:absolute;left:3px;top:1px;width:1px;height:5px;background:#000"></div></div>
<div class="a" style="left:68px;top:284px;line-height:14px;white-space:nowrap">零件<span style="letter-spacing:-0.6px">69</span></div>
<div class="a" style="left:37px;top:289px;width:10px;height:1px;background:repeating-linear-gradient(to right,#808080 0 1px,transparent 1px 2px)"></div>
<div class="a" style="left:32px;top:285px;width:9px;height:9px;border:1px solid #808080;background:#fff"><div style="position:absolute;left:1px;top:3px;width:5px;height:1px;background:#000"></div><div style="position:absolute;left:3px;top:1px;width:1px;height:5px;background:#000"></div></div>
<div class="a" style="left:68px;top:300px;line-height:14px;white-space:nowrap">零件<span style="letter-spacing:-0.6px">70</span></div>
<div class="a" style="left:37px;top:305px;width:10px;height:1px;background:repeating-linear-gradient(to right,#808080 0 1px,transparent 1px 2px)"></div>
<div class="a" style="left:32px;top:301px;width:9px;height:9px;border:1px solid #808080;background:#fff"><div style="position:absolute;left:1px;top:3px;width:5px;height:1px;background:#000"></div><div style="position:absolute;left:3px;top:1px;width:1px;height:5px;background:#000"></div></div>
<div class="a" style="left:68px;top:316px;line-height:14px;white-space:nowrap">照相机</div>
<div class="a" style="left:37px;top:321px;width:10px;height:1px;background:repeating-linear-gradient(to right,#808080 0 1px,transparent 1px 2px)"></div>
<div class="a" style="left:32px;top:317px;width:9px;height:9px;border:1px solid #808080;background:#fff"><div style="position:absolute;left:1px;top:3px;width:5px;height:1px;background:#000"></div><div style="position:absolute;left:3px;top:1px;width:1px;height:5px;background:#000"></div></div>
<div class="a" style="left:68px;top:332px;line-height:14px;white-space:nowrap">光源</div>
<div class="a" style="left:37px;top:337px;width:10px;height:1px;background:repeating-linear-gradient(to right,#808080 0 1px,transparent 1px 2px)"></div>
<div class="a" style="left:32px;top:333px;width:9px;height:9px;border:1px solid #808080;background:#fff"><div style="position:absolute;left:1px;top:3px;width:5px;height:1px;background:#000"></div><div style="position:absolute;left:3px;top:1px;width:1px;height:5px;background:#000"></div></div>
<div class="a" style="left:68px;top:348px;line-height:14px;white-space:nowrap">全局坐标系</div>
<div class="a" style="left:37px;top:353px;width:10px;height:1px;background:repeating-linear-gradient(to right,#808080 0 1px,transparent 1px 2px)"></div>
<div class="a" style="left:32px;top:349px;width:9px;height:9px;border:1px solid #808080;background:#fff"><div style="position:absolute;left:1px;top:3px;width:5px;height:1px;background:#000"></div><div style="position:absolute;left:3px;top:1px;width:1px;height:5px;background:#000"></div></div>
<svg class="a" style="left:28px;top:107px" width="16" height="16" viewBox="0 0 16 16" shape-rendering="crispEdges" ><g fill="#000"><rect x="8" y="0" width="1" height="1"/><rect x="4" y="2" width="1" height="1"/><rect x="12" y="2" width="1" height="1"/><rect x="8" y="4" width="1" height="1"/></g><path d="M0 3.5L9 7.5 16 3M0 11.5L9 15 16 10.5" stroke="#f00000" stroke-width="2.2" fill="none"/><path d="M5 6.5l4 1 4-2 0 5-4 3-4-2z" fill="#f00000"/><rect x="6" y="7" width="5" height="5" fill="#a00000"/></svg>
<svg class="a" style="left:47px;top:122px" width="16" height="16" viewBox="0 0 16 16" shape-rendering="crispEdges" ><path d="M1.5 8.5h9v6h-9z M1.5 8.5l3-3h9l-3 3 M13.5 5.5v6l-3 3 M4.5 5.5v-3h6v3 M4.5 2.5l2-2" fill="#fff" stroke="#000"/><path d="M4 3h6v3H4z" fill="#fff" stroke="#000"/></svg>
<svg class="a" style="left:47px;top:138px" width="16" height="16" viewBox="0 0 16 16" shape-rendering="crispEdges" ><path d="M3 16V10.5h5.5l3-3V4" fill="none" stroke="#000" stroke-width="4.5" stroke-linejoin="miter"/><path d="M3 16V10.5h5.5l3-3V4" fill="none" stroke="#fff" stroke-width="2" stroke-linejoin="miter"/><path d="M11.5 0.5l-4 4h8z" fill="#fff" stroke="#000"/><path d="M10.5 4.5h2" stroke="#fff"/></svg>
<svg class="a" style="left:47px;top:154px" width="16" height="16" viewBox="0 0 16 16" shape-rendering="crispEdges" ><path d="M3 16V10.5h5.5l3-3V4" fill="none" stroke="#000" stroke-width="4.5" stroke-linejoin="miter"/><path d="M3 16V10.5h5.5l3-3V4" fill="none" stroke="#fff" stroke-width="2" stroke-linejoin="miter"/><path d="M11.5 0.5l-4 4h8z" fill="#fff" stroke="#000"/><path d="M10.5 4.5h2" stroke="#fff"/></svg>
<svg class="a" style="left:47px;top:170px" width="16" height="16" viewBox="0 0 16 16" shape-rendering="crispEdges" ><path d="M3 16V10.5h5.5l3-3V4" fill="none" stroke="#000" stroke-width="4.5" stroke-linejoin="miter"/><path d="M3 16V10.5h5.5l3-3V4" fill="none" stroke="#fff" stroke-width="2" stroke-linejoin="miter"/><path d="M11.5 0.5l-4 4h8z" fill="#fff" stroke="#000"/><path d="M10.5 4.5h2" stroke="#fff"/></svg>
<svg class="a" style="left:47px;top:186px" width="16" height="16" viewBox="0 0 16 16" shape-rendering="crispEdges" ><path d="M3 16V10.5h5.5l3-3V4" fill="none" stroke="#000" stroke-width="4.5" stroke-linejoin="miter"/><path d="M3 16V10.5h5.5l3-3V4" fill="none" stroke="#fff" stroke-width="2" stroke-linejoin="miter"/><path d="M11.5 0.5l-4 4h8z" fill="#fff" stroke="#000"/><path d="M10.5 4.5h2" stroke="#fff"/></svg>
<svg class="a" style="left:47px;top:202px" width="16" height="16" viewBox="0 0 16 16" shape-rendering="crispEdges" ><path d="M3 16V10.5h5.5l3-3V4" fill="none" stroke="#000" stroke-width="4.5" stroke-linejoin="miter"/><path d="M3 16V10.5h5.5l3-3V4" fill="none" stroke="#fff" stroke-width="2" stroke-linejoin="miter"/><path d="M11.5 0.5l-4 4h8z" fill="#fff" stroke="#000"/><path d="M10.5 4.5h2" stroke="#fff"/></svg>
<svg class="a" style="left:47px;top:218px" width="16" height="16" viewBox="0 0 16 16" shape-rendering="crispEdges" ><path d="M2.5 3.5h8v5h-8z" fill="#e00000" stroke="#000"/><path d="M2.5 3.5l2-3h8l-2 3z" fill="#ff9090" stroke="#000"/><path d="M10.5 3.5l2-3v5l-2 3z" fill="#800000" stroke="#000"/><path d="M0.5 9.5h11v6h-11z" fill="#e00000" stroke="#000"/><path d="M0.5 9.5l3-3h12l-4 3z" fill="#ff9090" stroke="#000"/><path d="M11.5 9.5l4-3v5l-4 4z" fill="#800000" stroke="#000"/></svg>
<svg class="a" style="left:47px;top:234px" width="16" height="16" viewBox="0 0 16 16" shape-rendering="crispEdges" ><path d="M2.5 3.5h8v5h-8z" fill="#e00000" stroke="#000"/><path d="M2.5 3.5l2-3h8l-2 3z" fill="#ff9090" stroke="#000"/><path d="M10.5 3.5l2-3v5l-2 3z" fill="#800000" stroke="#000"/><path d="M0.5 9.5h11v6h-11z" fill="#e00000" stroke="#000"/><path d="M0.5 9.5l3-3h12l-4 3z" fill="#ff9090" stroke="#000"/><path d="M11.5 9.5l4-3v5l-4 4z" fill="#800000" stroke="#000"/></svg>
<svg class="a" style="left:47px;top:282px" width="16" height="16" viewBox="0 0 16 16" shape-rendering="crispEdges" ><path d="M2.5 3.5h8v5h-8z" fill="#e00000" stroke="#000"/><path d="M2.5 3.5l2-3h8l-2 3z" fill="#ff9090" stroke="#000"/><path d="M10.5 3.5l2-3v5l-2 3z" fill="#800000" stroke="#000"/><path d="M0.5 9.5h11v6h-11z" fill="#e00000" stroke="#000"/><path d="M0.5 9.5l3-3h12l-4 3z" fill="#ff9090" stroke="#000"/><path d="M11.5 9.5l4-3v5l-4 4z" fill="#800000" stroke="#000"/></svg>
<svg class="a" style="left:47px;top:298px" width="16" height="16" viewBox="0 0 16 16" shape-rendering="crispEdges" ><path d="M2.5 3.5h8v5h-8z" fill="#e00000" stroke="#000"/><path d="M2.5 3.5l2-3h8l-2 3z" fill="#ff9090" stroke="#000"/><path d="M10.5 3.5l2-3v5l-2 3z" fill="#800000" stroke="#000"/><path d="M0.5 9.5h11v6h-11z" fill="#e00000" stroke="#000"/><path d="M0.5 9.5l3-3h12l-4 3z" fill="#ff9090" stroke="#000"/><path d="M11.5 9.5l4-3v5l-4 4z" fill="#800000" stroke="#000"/></svg>
<svg class="a" style="left:47px;top:250px" width="16" height="16" viewBox="0 0 16 16" shape-rendering="crispEdges" ><path d="M9 15V6l2-3h2l1 3v2l2 2v5z" fill="#00e000" stroke="#000"/><path d="M10 4a2.5 2.5 0 0 1 5 0" stroke="#e00000" stroke-width="2" fill="none"/><path d="M0.5 9.5h8v6h-8z" fill="#fff" stroke="#000"/><path d="M1 9l3-3 3 3z" fill="#ffe000"/><path d="M2 14l4-4M4 10h2v2" stroke="#000" stroke-width="1.5"/></svg>
<svg class="a" style="left:47px;top:266px" width="16" height="16" viewBox="0 0 16 16" shape-rendering="crispEdges" ><path d="M9 15V6l2-3h2l1 3v2l2 2v5z" fill="#00e000" stroke="#000"/><path d="M10 4a2.5 2.5 0 0 1 5 0" stroke="#e00000" stroke-width="2" fill="none"/><path d="M0.5 9.5h8v6h-8z" fill="#fff" stroke="#000"/><path d="M1 9l3-3 3 3z" fill="#ffe000"/><path d="M2 14l4-4M4 10h2v2" stroke="#000" stroke-width="1.5"/></svg>
<svg class="a" style="left:47px;top:314px" width="16" height="16" viewBox="0 0 16 16" shape-rendering="crispEdges" ><path d="M5 9h10v6H5z" fill="#0020e0" stroke="#000"/><path d="M7 11h6M7 13h6" stroke="#fff"/><path d="M5 3h9v5H5z" fill="#e00000" stroke="#000"/><path d="M8 5h4" stroke="#fff"/><path d="M0 6l5 2v3l-5 2z" fill="#404040"/><path d="M12 1l3-1" stroke="#000"/></svg>
<svg class="a" style="left:47px;top:330px" width="16" height="16" viewBox="0 0 16 16" shape-rendering="crispEdges" ><path d="M1 3l4-3 5 5-3 4z" fill="#505050" stroke="#000"/><path d="M6 7l5 8h4l-5-9z" fill="#888"/><path d="M9 9l3 6" stroke="#e00000" stroke-width="1.5"/><path d="M11 8l3 7" stroke="#00c000" stroke-width="1.5"/><path d="M12 7l3 6" stroke="#0000e0" stroke-width="1.5"/><path d="M3 9l3 6" stroke="#000"/></svg>
<svg class="a" style="left:47px;top:346px" width="16" height="16" viewBox="0 0 16 16" shape-rendering="crispEdges" ><path d="M8 0l3 4h4l-2 4 2 4h-4l-3 4-3-4H1l2-4-2-4h4z" fill="#a0c0d0" stroke="#304050"/><path d="M8 2v12M3 5l10 6M13 5L3 11" stroke="#304050"/></svg>
<svg class="a" style="left:14px;top:32px" width="16" height="16" viewBox="0 0 16 16"><path d="M2.5 1.5h7l3 3v10h-10z" fill="#fff" stroke="#000"/><path d="M9.5 1.5v3h3" fill="none" stroke="#000"/><path d="M4 8l3 3 5-4" stroke="#e00000" stroke-width="2" fill="none"/><path d="M7 8l2 0" stroke="#e00000" stroke-width="1.5"/></svg>
<svg class="a" style="left:38px;top:32px" width="16" height="16" viewBox="0 0 16 16"><path d="M2.5 1.5h7l3 3v10h-10z" fill="#fff" stroke="#000"/><path d="M9.5 1.5v3h3" fill="none" stroke="#000"/><path d="M4 6h7v2H8.5v3H11v2H4v-2h2.5V8H4z" fill="#a00000"/></svg>
<svg class="a" style="left:63px;top:32px" width="16" height="16" viewBox="0 0 16 16"><path d="M0.5 5.5h5l1 1h5v7h-11z" fill="#ffff80" stroke="#000"/><path d="M2.5 8.5h13l-3 6h-12z" fill="#808000" stroke="#000"/><path d="M9 3q3-3 5 0" stroke="#000" fill="none"/><path d="M13 2l2 2-3 0z" fill="#000"/></svg>
<svg class="a" style="left:87px;top:32px" width="16" height="16" viewBox="0 0 16 16"><path d="M1.5 1.5h13v13h-13z" fill="#808000" stroke="#000"/><rect x="3.5" y="2" width="9" height="6" fill="#fff"/><rect x="4" y="10" width="8" height="4" fill="#000"/><rect x="9" y="11" width="2" height="2.5" fill="#fff"/></svg>
<svg class="a" style="left:119px;top:32px" width="16" height="16" viewBox="0 0 16 16"><path d="M3 6q5-5 9 0t-3 6" stroke="#0000c0" stroke-width="1.8" fill="none"/><path d="M1 4l5 1-4 4z" fill="#0000c0"/></svg>
<svg class="a" style="left:144px;top:32px" width="16" height="16" viewBox="0 0 16 16"><g transform="translate(1,1)" fill="#fff" stroke="#fff"><path d="M3 10q0-5 5-5t5 3" stroke-width="1.5" fill="none"/><path d="M15 6l-1 5-4-2z" stroke="none"/></g><g fill="#808080" stroke="#808080"><path d="M3 10q0-5 5-5t5 3" stroke-width="1.5" fill="none"/><path d="M15 6l-1 5-4-2z" stroke="none"/></g></svg>
<svg class="a" style="left:175px;top:32px" width="16" height="16" viewBox="0 0 16 16"><g fill="#808080"><path d="M4 5l3-2h5v6l-3 2H4z"/></g><path d="M4.5 5.5h5v5" stroke="#fff" fill="none"/><path d="M2 8q0-6 7-6" stroke="#808080" stroke-width="1.6" fill="none"/><path d="M14 8q0 6-7 6" stroke="#808080" stroke-width="1.6" fill="none"/><path d="M8 0l3 2-3 2zM8 16l-3-2 3-2z" fill="#808080"/></svg>
<svg class="a" style="left:199px;top:32px" width="16" height="16" viewBox="0 0 16 16"><g fill="#808080"><path d="M1 3l2-2h5v5l-2 2H1z"/><path d="M8 10l2-2h5v5l-2 2H8z"/></g><g fill="none" stroke="#fff"><path d="M1.5 3.5h5v4M3 1.5h5M9.5 10.5h5v4"/></g><path d="M9 2l3 2v3" stroke="#808080" fill="none"/><path d="M11 6l1 2 1-2z" fill="#808080"/></svg>
<svg class="a" style="left:223px;top:32px" width="16" height="16" viewBox="0 0 16 16"><path d="M2 1h5v5H2zM10 8h5v6h-5z" fill="#808080"/><path d="M8 2l5 3" stroke="#e00000" stroke-dasharray="1 1"/><path d="M12 4l2 2-3 0z" fill="#e00000"/><rect x="1.5" y="9.5" width="8" height="5" fill="#fff" stroke="#000"/><path d="M3 9V7q2.5-3 5 0v2" stroke="#000" fill="none"/><path d="M5.5 11v2" stroke="#000" stroke-width="2"/></svg>
<svg class="a" style="left:256px;top:32px" width="16" height="16" viewBox="0 0 16 16"><path d="M4 2L1 14M4 2l4 12M4 8L2 14M4 8l2 6" stroke="#000"/><g fill="#ffff00" stroke="#000"><circle cx="4" cy="2" r="1.3"/><circle cx="3" cy="8" r="1.3"/><circle cx="1.5" cy="14" r="1.3"/><circle cx="5" cy="14" r="1.3"/><circle cx="8.5" cy="14" r="1.3"/><circle cx="6" cy="9" r="1.3"/></g><circle cx="11.5" cy="4.5" r="3" fill="#00ffff" stroke="#000"/><path d="M12 8l1 6" stroke="#000" stroke-width="2"/></svg>
<svg class="a" style="left:287px;top:32px" width="16" height="16" viewBox="0 0 16 16"><g transform="translate(1,1)" fill="#fff" stroke="#fff"><path d="M2 1v11l3-3 2 4 2-1-2-4h4z" stroke="none"/><path d="M10 4q0-3 3-3t2 3-2 2v2M13 10v2" fill="none" stroke-width="1.6"/></g><g fill="#808080" stroke="#808080"><path d="M2 1v11l3-3 2 4 2-1-2-4h4z" stroke="none"/><path d="M10 4q0-3 3-3t2 3-2 2v2M13 10v2" fill="none" stroke-width="1.6"/></g></svg>
<svg class="a" style="left:325px;top:32px" width="16" height="16" viewBox="0 0 16 16"><path d="M8 14h7L11 6z" fill="#fff" stroke="#000"/><circle cx="11" cy="4" r="3" fill="#fff" stroke="#000"/><g stroke="#000" stroke-width="1.6"><path d="M1 8h7M4.5 4.5v7M2 6l5 4M7 6l-5 4"/></g><circle cx="4.5" cy="8" r="1.5" fill="#fff"/></svg>
<svg class="a" style="left:349px;top:32px" width="16" height="16" viewBox="0 0 16 16"><g transform="translate(1,1)" fill="#fff" stroke="#fff"><path d="M2 2l3 3M5 2l-3 3M3 8l4 7h8L9 4z" fill="none" stroke-width="1.3"/></g><g fill="#808080" stroke="#808080"><path d="M2 2l3 3M5 2l-3 3M3 8l4 7h8L9 4z" fill="none" stroke-width="1.3"/></g></svg>
<svg class="a" style="left:373px;top:32px" width="16" height="16" viewBox="0 0 16 16"><path d="M1.5 8.5h11v6h-11z" fill="#a00000" stroke="#000"/><path d="M1.5 8.5l3-3h11l-3 3z" fill="#c04040" stroke="#000"/><path d="M12.5 8.5l3-3v6l-3 3z" fill="#800000" stroke="#000"/><path d="M6 5.5v-2h5v2" fill="#fff" stroke="#000"/><path d="M1 1l3 2-3 2z" fill="#000"/><g fill="#ff8080" opacity="0.6"><rect x="3" y="10" width="1" height="1"/><rect x="5" y="12" width="1" height="1"/><rect x="7" y="10" width="1" height="1"/><rect x="9" y="12" width="1" height="1"/></g></svg>
<svg class="a" style="left:410px;top:32px" width="16" height="16" viewBox="0 0 16 16"><path d="M1.5 10.5h10v4h-10z" fill="#808080" stroke="#000"/><path d="M1.5 10.5l3-3h10l-3 3z" fill="#fff" stroke="#000"/><path d="M11.5 10.5l3-3v4l-3 3z" fill="#404040" stroke="#000"/><path d="M8 9V3" stroke="#c00000" stroke-width="2"/><path d="M5 4l3-4 3 4z" fill="#c00000"/></svg>
<svg class="a" style="left:434px;top:32px" width="16" height="16" viewBox="0 0 16 16"><path d="M5.5 1.5h6v3l2 3v4q0 3-5 3t-5-3v-4l2-3z" fill="#fff" stroke="#000"/><path d="M8 7v7q5 0 5-3V8z" fill="#909090"/><path d="M2 7q-1 4 5 4" stroke="#c00000" stroke-width="1.3" fill="none"/><path d="M6 9l3 2-3 2z" fill="#c00000"/></svg>
<svg class="a" style="left:459px;top:32px" width="16" height="16" viewBox="0 0 16 16"><path d="M1.5 14.5v-4q0-6 6-8l2 2q-5 2-5 6v4z" fill="#fff" stroke="#000"/><path d="M3 14v-3q0-5 5-7" stroke="#909090" stroke-width="1.5" fill="none"/><path d="M8 4l5-3" stroke="#c00000" stroke-dasharray="1 1"/><path d="M12 0l3 1-2 3z" fill="#c00000"/></svg>
<svg class="a" style="left:483px;top:32px" width="16" height="16" viewBox="0 0 16 16"><path d="M1.5 4.5l2-2h6l3 2-8 1z" fill="#fff" stroke="#000"/><path d="M1.5 5.5l3 3h6l-7-3z M3.5 8.5l2 3h7l-8-3z" fill="#fff" stroke="#000"/><path d="M5.5 11.5l2 3h8l-3-3z" fill="#fff" stroke="#000"/><path d="M4 4h6M6 7h5M8 10h5" stroke="#888"/></svg>
<svg class="a" style="left:514px;top:32px" width="16" height="16" viewBox="0 0 16 16"><path d="M1 14h4l1.5-3h4l0.5 3h3L12 1H10z M7.5 9l3-5 0.5 5z" fill="#000"/><path d="M12 3l2 11h2L13 2z" fill="#909090"/></svg>
<svg class="a" style="left:539px;top:32px" width="16" height="16" viewBox="0 0 16 16"><rect x="1" y="1" width="14" height="14" fill="#a0a0a0" opacity="0.7"/><path d="M1 1l14 14M4 1l11 11M1 4l11 11M7 1l8 8M1 7l8 8" stroke="#707070" stroke-width="0.8"/><path d="M4 5l8-3v8l-3 3v-3H5z" fill="#fff" stroke="#000"/></svg>
<svg class="a" style="left:577px;top:32px" width="16" height="16" viewBox="0 0 16 16"><path d="M2 14v-4h5l2-2V4H7l4-4 4 4h-2v5l-3 3H5v2z" fill="#a00000" stroke="#000"/></svg>
<svg class="a" style="left:602px;top:32px" width="16" height="16" viewBox="0 0 16 16"><path d="M3 3l4-1 3 2 4-1v10l-3 2-4-1-3 2-2-2V5z" fill="#c0c0c0"/><path d="M3 3l4-1 3 2v10l-4-1-3 2-2-2V5z" fill="none" stroke="#0000e0"/><path d="M10 4l4-1v10l-3 2" fill="none" stroke="#e00000"/><path d="M9 6v6M7 9h5" stroke="#e00000"/></svg>
<svg class="a" style="left:625px;top:32px" width="16" height="16" viewBox="0 0 16 16"><path d="M1 12l5-4h9l-5 4z" fill="none" stroke="#0000e0" stroke-width="1.2"/><path d="M7 1v15" stroke="#000" stroke-width="1.5"/><path d="M7 4l-3 8" stroke="#000"/><path d="M4 10l6 0" stroke="#e00000"/></svg>
<svg class="a" style="left:649px;top:32px" width="16" height="16" viewBox="0 0 16 16"><path d="M3 2h10M8 2v5" stroke="#a00000" stroke-width="1.5"/><path d="M5 5l3 3 3-3z" fill="#a00000"/><path d="M3 12l3-3h9l-3 3z" fill="none" stroke="#e00000" stroke-width="1.2"/><path d="M1 15l3-3h9l-3 3z" fill="none" stroke="#0000e0" stroke-width="1.2"/></svg>
<svg class="a" style="left:673px;top:32px" width="16" height="16" viewBox="0 0 16 16"><text x="0" y="9" font-family="Liberation Serif" font-weight="bold" font-size="10" fill="#000">f(x)</text><path d="M4 15v-3h3v-2" stroke="#a00000" stroke-width="1.5" fill="none"/><path d="M5 10l2-3 2 3z" fill="#a00000"/></svg>
<svg class="a" style="left:697px;top:32px" width="16" height="16" viewBox="0 0 16 16"><path d="M1 15v-5h4M15 2v5h-4" stroke="#000" stroke-width="1.5" fill="none"/><path d="M8 1v14" stroke="#0000e0" stroke-width="1.3"/><path d="M5 3l3 3 3-3zM5 13l3-3 3 3z" fill="#0000e0"/><path d="M4 8h8" stroke="#000"/></svg>
<svg class="a" style="left:721px;top:32px" width="16" height="16" viewBox="0 0 16 16"><path d="M1 4l13 10M4 15L15 2" stroke="#000" stroke-width="1.2"/><path d="M1 15L14 1" stroke="#c00000" stroke-width="1.3"/><path d="M7 6l6 6 2-2-6-6z" fill="#ffff00" stroke="#000"/><path d="M7 6l2-2 1 1-2 2z" fill="#00c0c0"/></svg>
<svg class="a" style="left:759px;top:32px" width="16" height="16" viewBox="0 0 16 16"><path d="M1 2h8" stroke="#000" stroke-width="1.5"/><path d="M9 2l6 6v7" fill="none" stroke="#000" stroke-width="1.5"/><path d="M9 8h6v7H9z" fill="#808080"/><path d="M1 12l3 3h5V8z" fill="#fff" opacity="0.6"/><path d="M2 10l6-8 6 6-6 7z" fill="#a00000"/><path d="M4 9l5-6M6 11l5-6M8 13l5-6" stroke="#ff8080" stroke-width="0.7" stroke-dasharray="1 1"/></svg>
<svg class="a" style="left:783px;top:32px" width="16" height="16" viewBox="0 0 16 16"><path d="M1 2h8" stroke="#000" stroke-width="1.5"/><path d="M9 2l6 6v7" fill="none" stroke="#000" stroke-width="1.5"/><path d="M9 8h6v7H9z" fill="#808080"/><path d="M1 12l3 3h5V8z" fill="#fff" opacity="0.6"/><path d="M3 8l5-6 6 6-5 5z" fill="#a00000"/><path d="M5 7l4-4M7 9l4-4M9 11l3-3" stroke="#ff8080" stroke-width="0.7" stroke-dasharray="1 1"/></svg>
<svg class="a" style="left:807px;top:32px" width="16" height="16" viewBox="0 0 16 16"><path d="M1 2h8" stroke="#000" stroke-width="1.5"/><path d="M9 2l6 6v7" fill="none" stroke="#000" stroke-width="1.5"/><path d="M9 8h6v7H9z" fill="#808080"/><path d="M1 12l3 3h5V8z" fill="#fff" opacity="0.6"/><path d="M1 9h5v6H1z" fill="#909090" stroke="#000"/><path d="M6 8l5-6 5 6-5 6z" fill="#a00000"/><path d="M8 7l4-4M10 10l3-3" stroke="#ff8080" stroke-width="0.7" stroke-dasharray="1 1"/></svg>
<svg class="a" style="left:839px;top:32px" width="16" height="16" viewBox="0 0 16 16"><path d="M1.5 11.5h11v3h-11z" fill="#909090" stroke="#000"/><path d="M1.5 11.5l3-3h10l-2 3z" fill="#fff" stroke="#000"/><path d="M12.5 11.5l2-3v3l-2 3z" fill="#404040" stroke="#000"/><path d="M1 5l3-3h11l-3 3z" fill="#c0c0c0" stroke="#000"/><path d="M8 11V4" stroke="#c00000" stroke-width="2"/><path d="M5 5l3-4 3 4z" fill="#c00000"/></svg>
<svg class="a" style="left:863px;top:32px" width="16" height="16" viewBox="0 0 16 16"><path d="M1.5 8.5h6v6h-6z" fill="#909090" stroke="#000"/><path d="M1 2h8" stroke="#000" stroke-width="1.5"/><path d="M6 8l5-5 4 4-5 6z" fill="#c0c0c0" stroke="#000"/><path d="M8 9q3-1 5-6" stroke="#c00000" stroke-width="1.8" fill="none"/><path d="M11 2h4v4z" fill="#c00000"/></svg>
<svg class="a" style="left:887px;top:32px" width="16" height="16" viewBox="0 0 16 16"><path d="M1 5l3-3h11l-3 3z" fill="#c0c0c0" stroke="#000"/><path d="M1 14l3-3h11l-3 3z" fill="#fff" stroke="#000"/><path d="M8 12V6" stroke="#c00000" stroke-width="2"/><path d="M5 7l3-4 3 4z" fill="#c00000"/></svg>
<svg class="a" style="left:912px;top:32px" width="16" height="16" viewBox="0 0 16 16"><g transform="translate(1,1)" fill="#fff" stroke="#fff"><path d="M2 6l4-4h9l-4 4zM1 15l4-4h9l-4 4z" stroke="none"/></g><g fill="#808080" stroke="#808080"><path d="M2 6l4-4h9l-4 4zM1 15l4-4h9l-4 4z" stroke="none"/></g></svg>
<svg class="a" style="left:935px;top:32px" width="16" height="16" viewBox="0 0 16 16"><g transform="translate(1,1)" fill="#fff" stroke="#fff"><path d="M1 2l3-1 11 11-3 3zM1 12l11-11 3 3-11 11z" stroke="none"/></g><g fill="#808080" stroke="#808080"><path d="M1 2l3-1 11 11-3 3zM1 12l11-11 3 3-11 11z" stroke="none"/></g></svg>
<svg class="a" style="left:959px;top:32px" width="16" height="16" viewBox="0 0 16 16"><g transform="translate(1,1)" fill="#fff" stroke="#fff"><path d="M2 3l3-2h9v11l-3 3H2z" stroke="none"/></g><g fill="#808080" stroke="#808080"><path d="M2 3l3-2h9v11l-3 3H2z" stroke="none"/></g><path d="M4 6h6M4 9h6M6 4v8" stroke="#d4d0c8" stroke-dasharray="1 1"/></svg>
<svg class="a" style="left:990px;top:32px" width="16" height="16" viewBox="0 0 16 16"><g transform="translate(1,1)" fill="#fff" stroke="#fff"><path d="M2 4l3-3h7l3 3v8l-3 3H2z" stroke="none"/></g><g fill="#808080" stroke="#808080"><path d="M2 4l3-3h7l3 3v8l-3 3H2z" stroke="none"/></g><path d="M4.5 7.5v5h6v-3h-3v-2z" fill="#d4d0c8" stroke="#fff"/></svg>
<svg class="a" style="left:1014px;top:32px" width="16" height="16" viewBox="0 0 16 16"><g transform="translate(1,1)" fill="#fff" stroke="#fff"><path d="M3 5l3-3h8l-3 3zM1 9h14l-2 2H1zM3 14l3-3h8l-3 3z" stroke="none"/></g><g fill="#808080" stroke="#808080"><path d="M3 5l3-3h8l-3 3zM1 9h14l-2 2H1zM3 14l3-3h8l-3 3z" stroke="none"/></g></svg>
<svg class="a" style="left:1038px;top:32px" width="16" height="16" viewBox="0 0 16 16"><path d="M2 5l3-3 9 9-3 3zM2 11l9-9 3 3-9 9z" fill="#808080" stroke="#000"/><path d="M3 4l8 8" stroke="#00ffff" stroke-width="1.5"/><path d="M11 11l4 4" stroke="#c00000" stroke-width="2"/></svg>
<svg class="a" style="left:1062px;top:32px" width="16" height="16" viewBox="0 0 16 16"><g transform="translate(1,1)" fill="#fff" stroke="#fff"><path d="M2 4l3-3h9v11l-3 3H2z" stroke="none"/></g><g fill="#808080" stroke="#808080"><path d="M2 4l3-3h9v11l-3 3H2z" stroke="none"/></g><path d="M3 13l7-7M3 10l5-5M5 14l7-7" stroke="#d4d0c8"/></svg>
<svg class="a" style="left:1087px;top:32px" width="16" height="16" viewBox="0 0 16 16"><g transform="translate(1,1)" fill="#fff" stroke="#fff"><path d="M2 4l3-3h9v11l-3 3H2z" stroke="none"/></g><g fill="#808080" stroke="#808080"><path d="M2 4l3-3h9v11l-3 3H2z" stroke="none"/></g><path d="M3 13l5-5M3 10l4-4M9 6h3v4" stroke="#d4d0c8"/></svg>
<svg class="a" style="left:1125px;top:32px" width="16" height="16" viewBox="0 0 16 16"><path d="M2 5l4-3 2 2v4l-2 2-4-2z" fill="none" stroke="#0000e0"/><path d="M8 4l5-2 2 3-2 4 1 3-4 3-4-2 0-3" fill="none" stroke="#e00000"/><path d="M2 8l4 2v4l-4-2z" fill="none" stroke="#0000e0"/></svg>
<svg class="a" style="left:1149px;top:32px" width="16" height="16" viewBox="0 0 16 16"><path d="M1 5q2-4 8-3l5 5q1 4-4 5L6 13z" fill="#c0c0c0" stroke="#0000e0" stroke-width="1.2"/><path d="M9 7l5 1v2l-4 2z" fill="#606060"/><path d="M6 13l3 3" stroke="#0000e0"/></svg>
<svg class="a" style="left:1174px;top:32px" width="16" height="16" viewBox="0 0 16 16"><path d="M2 3l4 2 9-1-1 4 1 4-9 2-4-3z" fill="#c0c0c0"/><path d="M2 3l4 2v4l-4 2" fill="none" stroke="#0000e0" stroke-width="1.2"/><path d="M6 9l9 5" stroke="#000"/><path d="M13 4l2 4-1 4" stroke="#e00000" stroke-width="1.2" fill="none"/><path d="M2 11l6 3" stroke="#606060" stroke-width="2"/></svg>
<svg class="a" style="left:1196px;top:32px" width="16" height="16" viewBox="0 0 16 16"><path d="M4 1h7v4q4 2 4 6t-6 4-6-4 3-5z" fill="none" stroke="#000" stroke-width="1.2"/><path d="M11 5q4 2 4 6" stroke="#0000e0" stroke-width="1.2" fill="none"/><path d="M1 8h8" stroke="#a00000" stroke-width="1.5"/><path d="M8 5l4 3-4 3z" fill="#a00000"/></svg>
<svg class="a" style="left:1221px;top:32px" width="16" height="16" viewBox="0 0 16 16"><path d="M1.5 4l3-2 3 1" fill="none" stroke="#0000e0" stroke-width="1.2"/><path d="M7.5 3l6 0 1 4-2 4v4" fill="none" stroke="#e00000" stroke-width="1.2"/><path d="M1.5 4l2 4-2 4" fill="none" stroke="#0000e0" stroke-width="1.2"/><path d="M1.5 12l5 2 6 1" stroke="#00e0e0" stroke-width="1.2"/></svg>
<svg class="a" style="left:1244px;top:32px" width="16" height="16" viewBox="0 0 16 16"><path d="M2 6q0-4 5-4v11q-5 0-5-3z" fill="#0000e0" stroke="#000"/></svg>
<svg class="a" style="left:20px;top:57px" width="16" height="16" viewBox="0 0 16 16"><g transform="translate(1,1)" fill="#fff" stroke="#fff"><path d="M1 6h4M3 4v4M1 10h4" stroke-width="1" fill="none"/><path d="M8 5l3-2h4v7l-2 3H8z" stroke="none"/></g><g fill="#808080" stroke="#808080"><path d="M1 6h4M3 4v4M1 10h4" stroke-width="1" fill="none"/><path d="M8 5l3-2h4v7l-2 3H8z" stroke="none"/></g></svg>
<svg class="a" style="left:44px;top:57px" width="16" height="16" viewBox="0 0 16 16"><g transform="translate(1,1)" fill="#fff" stroke="#fff"><path d="M2 1h10l3 3v5l-3 2v4H2z" stroke="none"/></g><g fill="#808080" stroke="#808080"><path d="M2 1h10l3 3v5l-3 2v4H2z" stroke="none"/></g><rect x="5" y="6" width="2" height="5" fill="#fff"/></svg>
<svg class="a" style="left:76px;top:57px" width="16" height="16" viewBox="0 0 16 16"><g transform="translate(1,1)" fill="#fff" stroke="#fff"><path d="M1 1h10l3 3v5l-3 3v3H1z" stroke="none"/></g><g fill="#808080" stroke="#808080"><path d="M1 1h10l3 3v5l-3 3v3H1z" stroke="none"/></g></svg>
<svg class="a" style="left:100px;top:57px" width="16" height="16" viewBox="0 0 16 16"><g transform="translate(1,1)" fill="#fff" stroke="#fff"><path d="M1 1h10l3 3v5l-3 3v3H1z" stroke="none"/></g><g fill="#808080" stroke="#808080"><path d="M1 1h10l3 3v5l-3 3v3H1z" stroke="none"/></g></svg>
<svg class="a" style="left:124px;top:57px" width="16" height="16" viewBox="0 0 16 16"><g transform="translate(1,1)" fill="#fff" stroke="#fff"><path d="M1 1h10l3 3v5l-3 3v3H1z" stroke="none"/></g><g fill="#808080" stroke="#808080"><path d="M1 1h10l3 3v5l-3 3v3H1z" stroke="none"/></g></svg>
<svg class="a" style="left:157px;top:57px" width="16" height="16" viewBox="0 0 16 16"><path d="M2 5l6-4 7 9-6 4z" fill="#fff" stroke="#000"/><path d="M3 3l11 11" stroke="#000" stroke-width="1.5"/><path d="M4 13L13 2" stroke="#c00000" stroke-width="1.5"/><path d="M9 5l4-2 0 4z" fill="#c00000"/><rect x="6" y="8" width="3" height="3" fill="#00a0a0"/></svg>
<svg class="a" style="left:9px;top:86px" width="16" height="16" viewBox="0 0 16 16"><path d="M4.5 1.5v11l3-3 2 5 2-1-2-5h4z" fill="#fff" stroke="#000"/></svg>
<svg class="a" style="left:31px;top:85px" width="18" height="18" viewBox="0 0 16 16"><rect x="0.5" y="1.5" width="12" height="8" fill="none" stroke="#808080"/><path d="M7.5 6.5v9l2.5-2.5 1.5 3.5 1.5-1-1.5-3.5h3z" fill="#fff" stroke="#000"/></svg>
<svg class="a" style="left:386px;top:85px" width="16" height="16" viewBox="0 0 16 16"><rect x="6" y="1" width="4" height="4" fill="#800000" stroke="#000"/><rect x="1" y="11" width="4" height="4" fill="#0000e0" stroke="#000"/><rect x="11" y="11" width="4" height="4" fill="#008000" stroke="#000"/><path d="M8 5v3M3 8h10M3 8v3M13 8v3" stroke="#000" fill="none"/></svg>
<svg class="a" style="left:4px;top:120px" width="16" height="16" viewBox="0 0 16 16"><path d="M8 1L11 4H9V5.5H7V4H5ZM8 15L11 12H9V10.5H7V12H5ZM1 8L4 5V7H5.5V9H4V11ZM15 8L12 5V7H10.5V9H12V11Z" fill="#000"/></svg>
<svg class="a" style="left:4px;top:142px" width="16" height="16" viewBox="0 0 16 16"><path d="M5 7q-4 1-3 4t7 3 5-3-2-4" stroke="#000" stroke-width="2.2" fill="none"/><path d="M8 3l5 4-6 2z" fill="#000"/></svg>
<svg class="a" style="left:4px;top:164px" width="16" height="16" viewBox="0 0 16 16"><path d="M6 2h4v4h3l-5 6-5-6h3z" fill="#fff" stroke="#000"/><path d="M1 8h4M11 8h4" stroke="#000"/><circle cx="8" cy="3" r="2" fill="#000"/></svg>
<svg class="a" style="left:4px;top:186px" width="16" height="16" viewBox="0 0 16 16"><path d="M10 1l4 3-3 1-4 4 3 2-4 4H3l4-4-3-2 5-5-1-2z" fill="#fff" stroke="#000" stroke-width="1.2"/></svg>
<svg class="a" style="left:4px;top:216px" width="16" height="16" viewBox="0 0 16 16"><circle cx="6" cy="6" r="4.5" fill="#c0ffff" stroke="#000" stroke-width="1.3"/><path d="M9.5 9.5l5 5" stroke="#000" stroke-width="2.2"/></svg>
<svg class="a" style="left:4px;top:238px" width="16" height="16" viewBox="0 0 16 16"><rect x="1.5" y="1.5" width="9" height="6" fill="none" stroke="#808080"/><circle cx="9" cy="9" r="3.5" fill="#c0ffff" stroke="#000" stroke-width="1.2"/><path d="M11.5 11.5l4 4" stroke="#000" stroke-width="2"/></svg>
<svg class="a" style="left:4px;top:260px" width="16" height="16" viewBox="0 0 16 16"><path d="M1.5 5.5h8v9h-8z" fill="#4040c0" stroke="#000"/><path d="M1.5 5.5l3-3h8l-3 3z" fill="#80ffff" stroke="#000"/><path d="M9.5 5.5l3-3v9l-3 3z" fill="#000080" stroke="#000"/><g fill="#fff" opacity="0.6"><rect x="3" y="7" width="1" height="1"/><rect x="5" y="9" width="1" height="1"/><rect x="7" y="7" width="1" height="1"/><rect x="3" y="11" width="1" height="1"/><rect x="7" y="11" width="1" height="1"/><rect x="5" y="13" width="1" height="1"/></g><path d="M11 9h5" stroke="#0000a0" stroke-width="1.5"/><path d="M11 9l3-2v4z" fill="#0000a0"/></svg>
<svg class="a" style="left:4px;top:282px" width="16" height="16" viewBox="0 0 16 16"><circle cx="8" cy="8" r="5" fill="none" stroke="#000" stroke-width="1.3"/><circle cx="8" cy="8" r="2.5" fill="none" stroke="#0000c0" stroke-width="1.5"/><path d="M8 0v5M8 11v5M0 8h5M11 8h5" stroke="#000" stroke-width="1.3"/></svg>
<svg class="a" style="left:4px;top:312px" width="16" height="16" viewBox="0 0 16 16"><rect x="5.5" y="2.5" width="8" height="8" fill="#d4d0c8" stroke="#808080"/><rect x="7" y="4" width="5" height="5" fill="#000080"/><rect x="8" y="5" width="3" height="1" fill="#00ffff"/><path d="M0 6h5M9 11v5" stroke="#0000c0" stroke-width="1.2"/><path d="M3 4l2 2-2 2zM7 13l2 2 2-2z" fill="#0000c0"/></svg>
<svg class="a" style="left:4px;top:333px" width="16" height="16" viewBox="0 0 16 16"><path d="M1 8h14v6H1z" fill="#000"/><path d="M4 8V6l2-2h3" stroke="#000" fill="none" stroke-width="1.3"/><rect x="3" y="10" width="2" height="2" fill="#fff"/><circle cx="9" cy="11" r="1.5" fill="#fff"/><rect x="12" y="10" width="1" height="2" fill="#fff"/><path d="M9 2q3-2 5 1" stroke="#0000c0" stroke-width="1.5" fill="none"/><path d="M13 1l2 3h-3z" fill="#0000c0"/></svg>
<svg class="a" style="left:4px;top:354px" width="16" height="16" viewBox="0 0 16 16"><g transform="translate(1,1)" fill="#fff" stroke="#fff"><path d="M1 9h13v6H1zM4 9V7l2-2h3" stroke="none"/></g><g fill="#808080" stroke="#808080"><path d="M1 9h13v6H1zM4 9V7l2-2h3" stroke="none"/></g><rect x="4" y="11" width="2" height="2" fill="#d4d0c8"/><circle cx="9" cy="12" r="1.5" fill="#d4d0c8"/></svg>
<svg class="a" style="left:4px;top:378px" width="16" height="16" viewBox="0 0 16 16"><path d="M0 4h9v5H0z" fill="#000"/><rect x="1" y="5" width="2" height="2" fill="#fff"/><circle cx="5" cy="6.5" r="1" fill="#fff"/><path d="M10 2l3 2-3 2z" fill="#000"/><path d="M6 10h10v6H6z" fill="#000"/><rect x="7" y="12" width="2" height="2" fill="#00ffff"/><circle cx="11" cy="13" r="1" fill="#00ffff"/><rect x="14" y="12" width="1" height="2" fill="#00ffff"/></svg>
<svg class="a" style="left:4px;top:409px" width="16" height="16" viewBox="0 0 16 16"><path d="M7 4h8M13 4l-7 6" stroke="#505050" fill="none"/><path d="M4 9l3-3 2 2-3 3" fill="#fff" stroke="#000"/><path d="M1.5 9.5h6v5h-6z" fill="#0000a0" stroke="#000"/><g fill="#fff" opacity="0.7"><rect x="3" y="11" width="1" height="1"/><rect x="5" y="12" width="1" height="1"/><rect x="4" y="13" width="1" height="1"/></g></svg>
<svg class="a" style="left:4px;top:444px" width="16" height="16" viewBox="0 0 16 16"><path d="M0.5 0.5h3v7.5h9.5v3h-12.5z" fill="#808080"/><path d="M3.5 0.5v8h9.5" fill="none" stroke="#0000c0" stroke-width="1.4"/><path d="M6.5 1.5l7.5 7" stroke="#a00000" stroke-width="1.2"/><path d="M5 0l4 0.5-3 3zM15.5 10l-0.5-4-3 3z" fill="#a00000"/></svg>
<svg class="a" style="left:4px;top:466px" width="16" height="16" viewBox="0 0 16 16"><path d="M0.5 3.5h3v8h9v3h-12z" fill="#808080"/><path d="M3.5 3.5v8.5h9v-11" fill="none" stroke="#0000c0" stroke-width="1.4"/><path d="M3.5 2.5h9M3.5 0.5v4M12.5 0.5v4" stroke="#a00000" stroke-width="1.1"/><path d="M4 2.5l2-1.5v3zM12 2.5l-2-1.5v3z" fill="#a00000"/></svg>
<svg class="a" style="left:4px;top:490px" width="16" height="16" viewBox="0 0 16 16"><path d="M0.5 2.5h3v8h9v3h-12z" fill="#808080"/><path d="M13 2.5H3.5v8h9.5" fill="none" stroke="#0000c0" stroke-width="1.4"/><path d="M14.5 2.5v8M12.5 2.5h3.5M12.5 10.5h3.5" stroke="#a00000" stroke-width="1.1"/><path d="M14.5 3l-1.5 2h3zM14.5 10l-1.5-2h3z" fill="#a00000"/></svg>
<svg class="a" style="left:4px;top:510px" width="16" height="16" viewBox="0 0 16 16"><path d="M0.5 8l7.5 5 7.5-5v7.5H0.5z" fill="#808080"/><path d="M0.5 8l7.5 5 7.5-5" fill="none" stroke="#0000c0" stroke-width="1.4"/><path d="M3 6q5-6 10 0" stroke="#a00000" stroke-width="1.2" fill="none"/><path d="M1 7.5l3.5-1.5-0.5 3zM15 7.5l-3.5-1.5 0.5 3z" fill="#a00000"/></svg>
<svg class="a" style="left:4px;top:534px" width="16" height="16" viewBox="0 0 16 16"><path d="M2 2h7q5 0 5 5v7H2z" fill="#808080"/><path d="M2 2h7q5 0 5 5v7" fill="none" stroke="#0000c0" stroke-width="1.3"/><path d="M4 12l8-8" stroke="#a00000"/><path d="M12 4l-3 0 3 3z" fill="#a00000"/></svg>
<svg class="a" style="left:4px;top:554px" width="16" height="16" viewBox="0 0 16 16"><circle cx="8" cy="8" r="6.5" fill="#808080" stroke="#0000c0" stroke-width="1.3"/><path d="M4 12l8-8" stroke="#a00000" stroke-width="1.2"/><path d="M12 4h-3l3 3zM4 12h3l-3-3z" fill="#a00000"/></svg>
<svg class="a" style="left:4px;top:584px" width="16" height="16" viewBox="0 0 16 16"><path d="M1 15h14" stroke="#0000c0" stroke-width="2"/><text x="6" y="10" font-family="Liberation Serif" font-weight="bold" font-size="11" fill="#a00000">A</text><path d="M2 8h5M4 8v5" stroke="#a00000"/></svg>
<svg class="a" style="left:4px;top:621px" width="16" height="16" viewBox="0 0 16 16"><path d="M10 4l2-3 3 3-3 2z" fill="#000"/><path d="M9 5l2 2-7 7-2 1 1-2z" fill="#fff" stroke="#000"/><path d="M4 12l5-5" stroke="#00e0e0" stroke-width="1.5"/><path d="M2 6l4-4" stroke="#0000c0"/><path d="M4 2h2v2z" fill="#0000c0"/></svg>
<svg class="a" style="left:4px;top:643px" width="16" height="16" viewBox="0 0 16 16"><path d="M10 4l2-3 3 3-3 2z" fill="#000"/><path d="M9 5l2 2-7 7-2 1 1-2z" fill="#0000e0" stroke="#000"/><path d="M9 6l1 1" stroke="#00e0e0"/><path d="M2 6l4-4" stroke="#0000c0"/><path d="M2 6h2V4z" fill="#0000c0"/></svg>
<svg class="a" style="left:4px;top:672px" width="16" height="16" viewBox="0 0 16 16"><g transform="translate(1,1)" fill="#fff" stroke="#fff"><path d="M2 3l4-2 5 4-1 4-5 1-3-3z" stroke="none"/></g><g fill="#808080" stroke="#808080"><path d="M2 3l4-2 5 4-1 4-5 1-3-3z" stroke="none"/></g><path d="M9 8l2 6 1-2 2 1z" fill="#fff" stroke="#808080"/></svg>
<svg class="a" style="left:4px;top:690px" width="16" height="16" viewBox="0 0 16 16"><g transform="translate(1,1)" fill="#fff" stroke="#fff"><path d="M3 15l3-4 3 4zM8 15l3-4 3 4z" stroke="none"/></g><g fill="#808080" stroke="#808080"><path d="M3 15l3-4 3 4zM8 15l3-4 3 4z" stroke="none"/></g></svg>
<svg class="a" style="left:40px;top:679px" width="16" height="16" viewBox="0 0 16 16"><g transform="translate(0.7,0.7)" fill="none" stroke="#fff" stroke-width="1.3"><rect x="2" y="8" width="4" height="5"/><rect x="10" y="8" width="4" height="5"/><path d="M2 4h10"/></g><g fill="none" stroke="#808080" stroke-width="1.3"><rect x="2" y="8" width="4" height="5"/><rect x="10" y="8" width="4" height="5"/><path d="M2 4h10"/></g><path d="M11 2l3 2-3 2z" fill="#808080"/></svg>
<svg class="a" style="left:64px;top:679px" width="16" height="16" viewBox="0 0 16 16"><g transform="translate(0.7,0.7)" fill="none" stroke="#fff" stroke-width="1.3"><rect x="1.5" y="2.5" width="12" height="11"/><rect x="1.5" y="8.5" width="5" height="5"/><path d="M6 9l6-6M9 3h3v3"/></g><g fill="none" stroke="#808080" stroke-width="1.3"><rect x="1.5" y="2.5" width="12" height="11"/><rect x="1.5" y="8.5" width="5" height="5"/><path d="M6 9l6-6M9 3h3v3"/></g></svg>
<svg class="a" style="left:88px;top:679px" width="16" height="16" viewBox="0 0 16 16"><g transform="translate(0.7,0.7)" fill="none" stroke="#fff" stroke-width="1.3"><path d="M4 4a6 6 0 1 0 4-2"/></g><g fill="none" stroke="#808080" stroke-width="1.3"><path d="M4 4a6 6 0 1 0 4-2"/></g><path d="M2 2l5 1-3 3z" fill="#808080"/></svg>
<svg class="a" style="left:112px;top:679px" width="16" height="16" viewBox="0 0 16 16"><g transform="translate(0.7,0.7)" fill="none" stroke="#fff" stroke-width="1.3"><path d="M2 15L14 1M3 6l4-4v4zM10 14v-4h4z"/><path d="M9 3l3 2"/></g><g fill="none" stroke="#808080" stroke-width="1.3"><path d="M2 15L14 1M3 6l4-4v4zM10 14v-4h4z"/><path d="M9 3l3 2"/></g></svg>
<svg class="a" style="left:136px;top:679px" width="16" height="16" viewBox="0 0 16 16"><g transform="translate(0.7,0.7)" fill="none" stroke="#fff" stroke-width="1.3"><path d="M1 3l6 6h8M7 9v3h8"/><path d="M11 9v4"/></g><g fill="none" stroke="#808080" stroke-width="1.3"><path d="M1 3l6 6h8M7 9v3h8"/><path d="M11 9v4"/></g><path d="M3 5l3 1-1 1z" fill="#808080"/></svg>
<svg class="a" style="left:160px;top:679px" width="16" height="16" viewBox="0 0 16 16"><circle cx="10" cy="4" r="3.5" fill="#707070"/><path d="M2 15l3-5h10l-3 5z" fill="#909090"/><path d="M3 12h11M4 13h10" stroke="#fff" stroke-dasharray="1 1"/><path d="M2 8v5M1 12l1 2 1-2" stroke="#707070"/></svg>
<svg class="a" style="left:192px;top:679px" width="16" height="16" viewBox="0 0 16 16"><g transform="translate(0.7,0.7)" fill="none" stroke="#fff" stroke-width="1.3"><path d="M2 2l12 12M14 2L2 14"/></g><g fill="none" stroke="#808080" stroke-width="1.3"><path d="M2 2l12 12M14 2L2 14"/></g><path d="M9 9l4 4 1-1-4-4z" fill="#808080"/></svg>
<svg class="a" style="left:215px;top:679px" width="16" height="16" viewBox="0 0 16 16"><g transform="translate(0.7,0.7)" fill="none" stroke="#fff" stroke-width="1.3"><path d="M1 8h10M12 2v12"/></g><g fill="none" stroke="#808080" stroke-width="1.3"><path d="M1 8h10M12 2v12"/></g><path d="M9 5l3 3-3 3z" fill="#808080"/></svg>
<svg class="a" style="left:239px;top:679px" width="16" height="16" viewBox="0 0 16 16"><g transform="translate(0.7,0.7)" fill="none" stroke="#fff" stroke-width="1.3"><path d="M2 2l12 12M14 2L2 14"/></g><g fill="none" stroke="#808080" stroke-width="1.3"><path d="M2 2l12 12M14 2L2 14"/></g><path d="M6 5l6 6 2-1-6-6z" fill="#808080"/></svg>
<svg class="a" style="left:271px;top:679px" width="16" height="16" viewBox="0 0 16 16"><g transform="translate(0.7,0.7)" fill="none" stroke="#fff" stroke-width="1.3"><path d="M3 3h5M3 3v4M3 3l4 4M5 13l9-9M2 10l3-3"/></g><g fill="none" stroke="#808080" stroke-width="1.3"><path d="M3 3h5M3 3v4M3 3l4 4M5 13l9-9M2 10l3-3"/></g><path d="M11 2h4v4z" fill="#808080"/></svg>
<svg class="a" style="left:295px;top:679px" width="16" height="16" viewBox="0 0 16 16"><g transform="translate(0.7,0.7)" fill="none" stroke="#fff" stroke-width="1.3"><path d="M3 3h8l-8 8zM3 3l10 10M13 5v8" stroke-dasharray="2 1"/></g><g fill="none" stroke="#808080" stroke-width="1.3"><path d="M3 3h8l-8 8zM3 3l10 10M13 5v8" stroke-dasharray="2 1"/></g><path d="M1 1h4v3z" fill="#808080"/></svg>
<svg class="a" style="left:332px;top:679px" width="16" height="16" viewBox="0 0 16 16"><g transform="translate(0.7,0.7)" fill="none" stroke="#fff" stroke-width="1.3"><path d="M2 3l10 10"/></g><g fill="none" stroke="#808080" stroke-width="1.3"><path d="M2 3l10 10"/></g></svg>
<svg class="a" style="left:358px;top:679px" width="16" height="16" viewBox="0 0 16 16"><g transform="translate(0.7,0.7)" fill="none" stroke="#fff" stroke-width="1.3"><path d="M1 3l6 4M7 7l3 5M11 5l-4 2"/></g><g fill="none" stroke="#808080" stroke-width="1.3"><path d="M1 3l6 4M7 7l3 5M11 5l-4 2"/></g></svg>
<svg class="a" style="left:382px;top:679px" width="16" height="16" viewBox="0 0 16 16"><g transform="translate(0.7,0.7)" fill="none" stroke="#fff" stroke-width="1.3"><path d="M2 6h5l6-5M7 6v9"/></g><g fill="none" stroke="#808080" stroke-width="1.3"><path d="M2 6h5l6-5M7 6v9"/></g></svg>
<svg class="a" style="left:414px;top:679px" width="16" height="16" viewBox="0 0 16 16"><g fill="#707070"><rect x="1" y="1" width="3" height="3"/><rect x="1" y="12" width="3" height="3"/><rect x="7" y="12" width="3" height="3"/><rect x="7" y="4" width="3" height="3"/><rect x="13" y="4" width="3" height="3"/></g><g fill="none" stroke="#808080" stroke-width="1.3"><path d="M2 3v10h6M8 6v7M9 5h5"/></g></svg>
<svg class="a" style="left:437px;top:679px" width="16" height="16" viewBox="0 0 16 16"><g transform="translate(0.7,0.7)" fill="none" stroke="#fff" stroke-width="1.3"><circle cx="5" cy="9" r="3.5"/><circle cx="10" cy="6" r="3.5"/></g><g fill="none" stroke="#808080" stroke-width="1.3"><circle cx="5" cy="9" r="3.5"/><circle cx="10" cy="6" r="3.5"/></g><g fill="#707070"><rect x="10" y="1" width="3" height="3"/><rect x="2" y="8" width="3" height="3"/><rect x="5" y="12" width="3" height="3"/></g></svg>
<svg class="a" style="left:462px;top:679px" width="16" height="16" viewBox="0 0 16 16"><g transform="translate(0.7,0.7)" fill="none" stroke="#fff" stroke-width="1.3"><rect x="2" y="4" width="11" height="8"/></g><g fill="none" stroke="#808080" stroke-width="1.3"><rect x="2" y="4" width="11" height="8"/></g></svg>
<svg class="a" style="left:493px;top:679px" width="16" height="16" viewBox="0 0 16 16"><g transform="translate(0.7,0.7)" fill="none" stroke="#fff" stroke-width="1.3"><path d="M5 2h6l4 6-4 6H5L1 8z"/></g><g fill="none" stroke="#808080" stroke-width="1.3"><path d="M5 2h6l4 6-4 6H5L1 8z"/></g><rect x="6" y="6" width="4" height="4" fill="#707070"/><path d="M13 6l3 2-3 2z" fill="#707070"/></svg>
<svg class="a" style="left:517px;top:679px" width="16" height="16" viewBox="0 0 16 16"><g transform="translate(0.7,0.7)" fill="none" stroke="#fff" stroke-width="1.3"><path d="M5 3h6l4 5-4 5H5L1 8z"/></g><g fill="none" stroke="#808080" stroke-width="1.3"><path d="M5 3h6l4 5-4 5H5L1 8z"/></g><path d="M0 8l3-2v4zM16 8l-3-2v4z" fill="#707070"/></svg>
<svg class="a" style="left:541px;top:679px" width="16" height="16" viewBox="0 0 16 16"><g transform="translate(0.7,0.7)" fill="none" stroke="#fff" stroke-width="1.3"><path d="M5 3h6l3 5-3 6H5L2 8z"/></g><g fill="none" stroke="#808080" stroke-width="1.3"><path d="M5 3h6l3 5-3 6H5L2 8z"/></g><g fill="#707070"><rect x="6" y="1" width="4" height="3"/><rect x="1" y="11" width="3" height="3"/><rect x="12" y="11" width="3" height="3"/></g></svg>
<svg class="a" style="left:564px;top:679px" width="16" height="16" viewBox="0 0 16 16"><g transform="translate(0.7,0.7)" fill="none" stroke="#fff" stroke-width="1.3"><path d="M5 3h6l3 5-3 6H5L2 8zM0 10h3M13 10h3"/></g><g fill="none" stroke="#808080" stroke-width="1.3"><path d="M5 3h6l3 5-3 6H5L2 8zM0 10h3M13 10h3"/></g><g fill="#707070"><rect x="6" y="1" width="4" height="3"/><rect x="11" y="9" width="3" height="3"/></g></svg>
<svg class="a" style="left:589px;top:679px" width="16" height="16" viewBox="0 0 16 16"><g transform="translate(0.7,0.7)" fill="none" stroke="#fff" stroke-width="1.3"><path d="M5 3h6l3 5-3 6H5L2 8zM0 10h3M13 10h3M6 14v2M10 14v2"/></g><g fill="none" stroke="#808080" stroke-width="1.3"><path d="M5 3h6l3 5-3 6H5L2 8zM0 10h3M13 10h3M6 14v2M10 14v2"/></g><rect x="6" y="1" width="4" height="3" fill="#707070"/></svg>
<svg class="a" style="left:613px;top:679px" width="16" height="16" viewBox="0 0 16 16"><g transform="translate(0.7,0.7)" fill="none" stroke="#fff" stroke-width="1.3"><path d="M5 4h6l3 5-3 5H5L2 9zM0 10h3M13 10h3M6 14v2M10 14v2M4 1l2 3M12 1l-2 3"/></g><g fill="none" stroke="#808080" stroke-width="1.3"><path d="M5 4h6l3 5-3 5H5L2 9zM0 10h3M13 10h3M6 14v2M10 14v2M4 1l2 3M12 1l-2 3"/></g></svg>
<svg class="a" style="left:646px;top:679px" width="16" height="16" viewBox="0 0 16 16"><g transform="translate(0.7,0.7)" fill="none" stroke="#fff" stroke-width="1.3"><path d="M4 3h4q4 0 4 5v5"/></g><g fill="none" stroke="#808080" stroke-width="1.3"><path d="M4 3h4q4 0 4 5v5"/></g><rect x="2" y="2" width="3" height="3" fill="#707070"/><rect x="11" y="11" width="3" height="3" fill="#707070"/></svg>
<svg class="a" style="left:670px;top:679px" width="16" height="16" viewBox="0 0 16 16"><g transform="translate(0.7,0.7)" fill="none" stroke="#fff" stroke-width="1.3"><path d="M4 3h4q4 0 4 5v3l-2 2"/><path d="M4 3q0 5 3 8"/></g><g fill="none" stroke="#808080" stroke-width="1.3"><path d="M4 3h4q4 0 4 5v3l-2 2"/><path d="M4 3q0 5 3 8"/></g><rect x="2" y="2" width="3" height="3" fill="#707070"/><rect x="9" y="11" width="3" height="3" fill="#707070"/></svg>
<svg class="a" style="left:694px;top:679px" width="16" height="16" viewBox="0 0 16 16"><g transform="translate(0.7,0.7)" fill="none" stroke="#fff" stroke-width="1.3"><path d="M4 3h5q3 0 3 4v5"/></g><g fill="none" stroke="#808080" stroke-width="1.3"><path d="M4 3h5q3 0 3 4v5"/></g><rect x="2" y="2" width="3" height="3" fill="#707070"/><rect x="11" y="11" width="3" height="3" fill="#707070"/></svg>
<svg class="a" style="left:725px;top:679px" width="16" height="16" viewBox="0 0 16 16"><g transform="translate(0.7,0.7)" fill="none" stroke="#fff" stroke-width="1.3"><path d="M5 4q5-2 5 3l-4 3q3 3 6 1"/></g><g fill="none" stroke="#808080" stroke-width="1.3"><path d="M5 4q5-2 5 3l-4 3q3 3 6 1"/></g><rect x="3" y="2" width="3" height="3" fill="#707070"/><rect x="10" y="10" width="3" height="3" fill="#707070"/></svg>
<svg class="a" style="left:756px;top:679px" width="16" height="16" viewBox="0 0 16 16"><g transform="translate(0.7,0.7)" fill="none" stroke="#fff" stroke-width="1.3"><path d="M3 15V7q0-5 5-5h6"/></g><g fill="none" stroke="#808080" stroke-width="1.3"><path d="M3 15V7q0-5 5-5h6"/></g><path d="M2 4h2v2z" fill="#707070"/></svg>
<svg class="a" style="left:789px;top:679px" width="16" height="16" viewBox="0 0 16 16"><g transform="translate(0.7,0.7)" fill="none" stroke="#fff" stroke-width="1.3"><path d="M1 5h14M1 11h14M4 2v14M11 2v14M5 10l7-7"/></g><g fill="none" stroke="#808080" stroke-width="1.3"><path d="M1 5h14M1 11h14M4 2v14M11 2v14M5 10l7-7"/></g><path d="M13 6l3 3-3 4z" fill="#707070"/></svg>
<svg class="a" style="left:827px;top:679px" width="16" height="16" viewBox="0 0 16 16"><g transform="translate(0.7,0.7)" fill="none" stroke="#fff" stroke-width="1.3"><path d="M3 2v12h13M3 9h5v5"/></g><g fill="none" stroke="#808080" stroke-width="1.3"><path d="M3 2v12h13M3 9h5v5"/></g></svg>
<svg class="a" style="left:852px;top:679px" width="16" height="16" viewBox="0 0 16 16"><g transform="translate(0.7,0.7)" fill="none" stroke="#fff" stroke-width="1.3"><circle cx="7" cy="7" r="3.5"/><path d="M3 15L15 3"/></g><g fill="none" stroke="#808080" stroke-width="1.3"><circle cx="7" cy="7" r="3.5"/><path d="M3 15L15 3"/></g></svg>
<svg class="a" style="left:875px;top:679px" width="16" height="16" viewBox="0 0 16 16"><g transform="translate(0.7,0.7)" fill="none" stroke="#fff" stroke-width="1.3"><path d="M1 6h14M1 11h14M5 15l3-13M9 15l3-13"/></g><g fill="none" stroke="#808080" stroke-width="1.3"><path d="M1 6h14M1 11h14M5 15l3-13M9 15l3-13"/></g></svg>
<svg class="a" style="left:899px;top:679px" width="16" height="16" viewBox="0 0 16 16"><g transform="translate(0.7,0.7)" fill="none" stroke="#fff" stroke-width="1.3"><path d="M2 9h12M7 6h3"/></g><g fill="none" stroke="#808080" stroke-width="1.3"><path d="M2 9h12M7 6h3"/></g></svg>
<svg class="a" style="left:923px;top:679px" width="16" height="16" viewBox="0 0 16 16"><g transform="translate(0.7,0.7)" fill="none" stroke="#fff" stroke-width="1.3"><path d="M8 3v10"/></g><g fill="none" stroke="#808080" stroke-width="1.3"><path d="M8 3v10"/></g></svg>
<svg class="a" style="left:947px;top:679px" width="16" height="16" viewBox="0 0 16 16"><g transform="translate(0.7,0.7)" fill="none" stroke="#fff" stroke-width="1.3"><path d="M5 2h6l4 4v5l-4 4H5l-4-4V6z"/><circle cx="8" cy="8.5" r="3.5"/></g><g fill="none" stroke="#808080" stroke-width="1.3"><path d="M5 2h6l4 4v5l-4 4H5l-4-4V6z"/><circle cx="8" cy="8.5" r="3.5"/></g><circle cx="8" cy="8.5" r="1" fill="#707070"/></svg>
<svg class="a" style="left:972px;top:679px" width="16" height="16" viewBox="0 0 16 16"><g transform="translate(0.7,0.7)" fill="none" stroke="#fff" stroke-width="1.3"><path d="M2 3l3-2 10 10-3 3z"/><path d="M7 5h3v3"/></g><g fill="none" stroke="#808080" stroke-width="1.3"><path d="M2 3l3-2 10 10-3 3z"/><path d="M7 5h3v3"/></g></svg>
<svg class="a" style="left:995px;top:679px" width="16" height="16" viewBox="0 0 16 16"><g transform="translate(0.7,0.7)" fill="none" stroke="#fff" stroke-width="1.3"><path d="M1 4h14M1 8h14M1 12h14"/></g><g fill="none" stroke="#808080" stroke-width="1.3"><path d="M1 4h14M1 8h14M1 12h14"/></g><path d="M1 8l3-2v4zM15 8l-3-2v4z" fill="#707070"/></svg>
<svg class="a" style="left:1020px;top:679px" width="16" height="16" viewBox="0 0 16 16"><g transform="translate(0.7,0.7)" fill="none" stroke="#fff" stroke-width="1.3"><path d="M2 13h14M2 13l5-9M5 9q3 1 3 4"/></g><g fill="none" stroke="#808080" stroke-width="1.3"><path d="M2 13h14M2 13l5-9M5 9q3 1 3 4"/></g></svg>
<svg class="a" style="left:1044px;top:679px" width="16" height="16" viewBox="0 0 16 16"><g transform="translate(0.7,0.7)" fill="none" stroke="#fff" stroke-width="1.3"><path d="M2 2l12 12"/></g><g fill="none" stroke="#808080" stroke-width="1.3"><path d="M2 2l12 12"/></g></svg>
<div class="a" style="left:1224px;top:104px;width:28px;height:569px;background:#d4d0c8"></div>
<div class="a" style="left:1222px;top:104px;width:2px;height:570px;background:#fff"></div>
<div class="a" style="left:1226px;top:106px;width:1px;height:567px;background:#000"></div>
<div class="a" style="left:1250px;top:104px;width:1px;height:569px;background:#808080"></div>
<div class="a" style="left:1251px;top:104px;width:1px;height:569px;background:#404040"></div>
<div class="a" style="left:1222px;top:672px;width:30px;height:1px;background:#404040"></div>
<div class="a" style="left:1230px;top:107px;width:15px;height:15px;background:#d4d0c8;border-top:1px solid #000;border-left:1px solid #000;border-right:1px solid #000;border-bottom:1px solid #000;box-shadow:inset 1px 1px 0 #fff,inset -1px -1px 0 #808080"><svg width="13" height="13" style="position:absolute;left:0;top:0" shape-rendering="crispEdges"><path d="M3 3h8M7 4l-4 5h8z" fill="#000" stroke="#000"/></svg></div>
<div class="a" style="left:1230px;top:122px;width:15px;height:15px;background:#d4d0c8;border-top:1px solid #000;border-left:1px solid #000;border-right:1px solid #000;border-bottom:1px solid #000;box-shadow:inset 1px 1px 0 #fff,inset -1px -1px 0 #808080"><svg width="13" height="13" style="position:absolute;left:0;top:0" shape-rendering="crispEdges"><path d="M7 4l-4 5h8z" fill="#000"/></svg></div>
<div class="a" style="left:1230px;top:137px;width:15px;height:15px;background:#d4d0c8;border-top:1px solid #000;border-left:1px solid #000;border-right:1px solid #000;border-bottom:1px solid #000;box-shadow:inset 1px 1px 0 #fff,inset -1px -1px 0 #808080"><svg width="13" height="13" style="position:absolute;left:0;top:0" shape-rendering="crispEdges"><path d="M3 5h8l-4 5z" fill="#000"/></svg></div>
<div class="a" style="left:1230px;top:152px;width:15px;height:15px;background:#d4d0c8;border-top:1px solid #000;border-left:1px solid #000;border-right:1px solid #000;border-bottom:1px solid #000;box-shadow:inset 1px 1px 0 #fff,inset -1px -1px 0 #808080"><svg width="13" height="13" style="position:absolute;left:0;top:0" shape-rendering="crispEdges"><path d="M3 5h8l-4 5zM3 11h8" fill="#000" stroke="#000"/></svg></div>
<div class="a" style="left:1228px;top:175px;width:20px;height:40px;border-top:1px solid #fff;border-right:1px solid #404040;border-bottom:1px solid #404040;box-shadow:inset -1px -1px 0 #808080;border-radius:0 0 3px 0;background:#d4d0c8;overflow:hidden"><div style="position:absolute;left:18px;top:5px;transform-origin:0 0;transform:rotate(90deg);white-space:nowrap;line-height:14px;font-size:13px;letter-spacing:2px;-webkit-text-stroke:0.3px #000">图素</div></div>
<div class="a" style="left:1228px;top:216px;width:20px;height:71px;border-top:1px solid #fff;border-right:1px solid #404040;border-bottom:1px solid #404040;box-shadow:inset -1px -1px 0 #808080;border-radius:0 0 3px 0;background:#d4d0c8;overflow:hidden"><div style="position:absolute;left:18px;top:5px;transform-origin:0 0;transform:rotate(90deg);white-space:nowrap;line-height:14px;font-size:13px;letter-spacing:2px;-webkit-text-stroke:0.3px #000">高级图素</div></div>
<div class="a" style="left:1228px;top:289px;width:20px;height:40px;border-top:1px solid #fff;border-right:1px solid #404040;border-bottom:1px solid #404040;box-shadow:inset -1px -1px 0 #808080;border-radius:0 0 3px 0;background:#d4d0c8;overflow:hidden"><div style="position:absolute;left:18px;top:5px;transform-origin:0 0;transform:rotate(90deg);white-space:nowrap;line-height:14px;font-size:13px;letter-spacing:2px;-webkit-text-stroke:0.3px #000">钣金</div></div>
<div class="a" style="left:1228px;top:331px;width:20px;height:39px;border-top:1px solid #fff;border-right:1px solid #404040;border-bottom:1px solid #404040;box-shadow:inset -1px -1px 0 #808080;border-radius:0 0 3px 0;background:#d4d0c8;overflow:hidden"><div style="position:absolute;left:18px;top:5px;transform-origin:0 0;transform:rotate(90deg);white-space:nowrap;line-height:14px;font-size:13px;letter-spacing:2px;-webkit-text-stroke:0.3px #000">工具</div></div>
<div class="a" style="left:1228px;top:372px;width:20px;height:40px;border-top:1px solid #fff;border-right:1px solid #404040;border-bottom:1px solid #404040;box-shadow:inset -1px -1px 0 #808080;border-radius:0 0 3px 0;background:#d4d0c8;overflow:hidden"><div style="position:absolute;left:18px;top:5px;transform-origin:0 0;transform:rotate(90deg);white-space:nowrap;line-height:14px;font-size:13px;letter-spacing:2px;-webkit-text-stroke:0.3px #000">动画</div></div>
<div class="a" style="left:1228px;top:415px;width:20px;height:66px;border-top:1px solid #fff;border-right:1px solid #404040;border-bottom:1px solid #404040;box-shadow:inset -1px -1px 0 #808080;border-radius:0 0 3px 0;background:#d4d0c8;overflow:hidden"><div style="position:absolute;left:18px;top:5px;transform-origin:0 0;transform:rotate(90deg);white-space:nowrap;line-height:14px;font-size:13px;letter-spacing:2px;-webkit-text-stroke:0.3px #000">表面光泽</div></div>
<div class="a" style="left:1228px;top:485px;width:20px;height:40px;border-top:1px solid #fff;border-right:1px solid #404040;border-bottom:1px solid #404040;box-shadow:inset -1px -1px 0 #808080;border-radius:0 0 3px 0;background:#d4d0c8;overflow:hidden"><div style="position:absolute;left:18px;top:5px;transform-origin:0 0;transform:rotate(90deg);white-space:nowrap;line-height:14px;font-size:13px;letter-spacing:2px;-webkit-text-stroke:0.3px #000">材质</div></div>
<div class="a" style="left:1228px;top:529px;width:20px;height:39px;border-top:1px solid #fff;border-right:1px solid #404040;border-bottom:1px solid #404040;box-shadow:inset -1px -1px 0 #808080;border-radius:0 0 3px 0;background:#d4d0c8;overflow:hidden"><div style="position:absolute;left:18px;top:5px;transform-origin:0 0;transform:rotate(90deg);white-space:nowrap;line-height:14px;font-size:13px;letter-spacing:2px;-webkit-text-stroke:0.3px #000">凸痕</div></div>
<div class="a" style="left:1228px;top:571px;width:20px;height:37px;border-top:1px solid #fff;border-right:1px solid #404040;border-bottom:1px solid #404040;box-shadow:inset -1px -1px 0 #808080;border-radius:0 0 3px 0;background:#d4d0c8;overflow:hidden"><div style="position:absolute;left:18px;top:5px;transform-origin:0 0;transform:rotate(90deg);white-space:nowrap;line-height:14px;font-size:13px;letter-spacing:2px;-webkit-text-stroke:0.3px #000">颜色</div></div>
<div class="a" style="left:1226px;top:609px;width:22px;height:64px;border-top:1px solid #fff;border-left:1px solid #000;border-right:1px solid #404040;background:#d4d0c8;overflow:hidden"><div style="position:absolute;left:20px;top:4px;transform-origin:0 0;transform:rotate(90deg);white-space:nowrap;line-height:14px;font-size:13px;font-weight:bold;letter-spacing:3px">金属纹理</div></div>
<svg class="a" style="left:567px;top:-4px" width="14" height="18" viewBox="0 0 14 18"><path d="M1.5 -1.5v15l3.5-3.5 3 6 2.5-1-3-5.5h5z" fill="#fff" stroke="#000"/></svg>
<svg class="a" style="left:186px;top:628px" width="50" height="44" viewBox="0 0 50 44">
<path d="M16 10l18 -1" stroke="#60d060" stroke-width="3"/><path d="M13 10l6-3 1 5z" fill="#60d060"/>
<circle cx="35" cy="10" r="3" fill="#f08080"/><circle cx="34" cy="7" r="2" fill="#fff" stroke="#606060" stroke-width="0.6"/>
<path d="M34 10v16" stroke="#7070e0" stroke-width="2.5"/><path d="M31 22l3 7 3-7z" fill="#7070e0"/>
<text x="4" y="12" font-family="Liberation Mono" font-size="9" font-weight="bold" fill="#20e020">Y</text>
<text x="40" y="15" font-family="Liberation Mono" font-size="9" font-weight="bold" fill="#e00000">X</text>
<text x="31" y="38" font-family="Liberation Mono" font-size="9" font-weight="bold" fill="#0000e0">Z</text>
</svg>
</body></html>
